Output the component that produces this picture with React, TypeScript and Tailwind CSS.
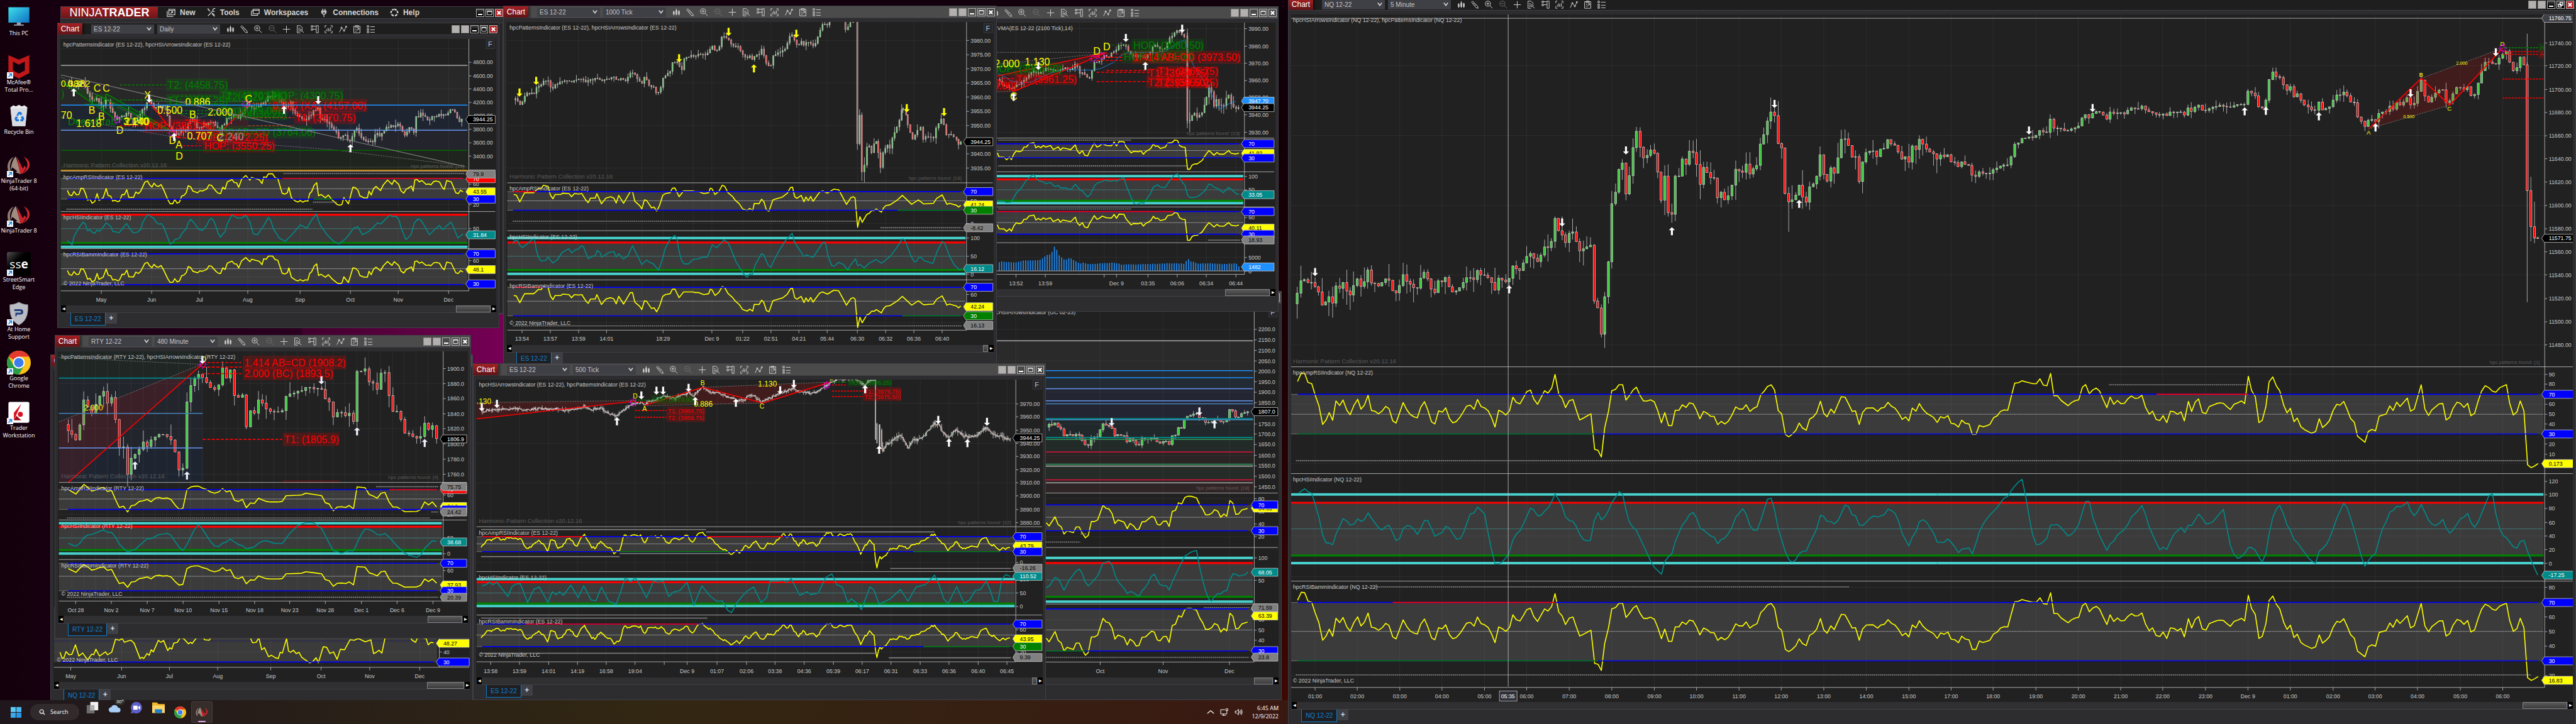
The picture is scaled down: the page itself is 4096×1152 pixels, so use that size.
import { createContext, useContext } from "react";
import type { ReactNode } from "react";

const GREEN = "#008000";
const BLUE = "#0000ff";
const RED = "#ff0000";
const YELLOW = "#ffff00";
const TEAL = "#008b8b";
const TURQ = "#48d1cc";
const SKY = "#1e90ff";
const GRAY = "#808080";
const LIGHT = "#c8c8c8";

/* ---------- chart geometry ---------- */

type Geo = {
  o: [number, number]; // origin of the plotting grid
  s: [number, number]; // grid unit size
  l: number; // left edge of the plot
  r: number; // right edge of the plot
  a: number; // price axis
  e: number; // end of the axis column
};

const GeoCtx = createContext<Geo>({ o: [0, 0], s: [1, 1], l: 0, r: 0, a: 0, e: 0 });

function useGeo() {
  const g = useContext(GeoCtx);
  return {
    ...g,
    X: (n: number) => g.o[0] + n * g.s[0],
    Y: (n: number) => g.o[1] + n * g.s[1],
  };
}

const parse = (pts: string) =>
  pts
    .trim()
    .split(/\s+/)
    .map((p) => p.split(",").map(Number) as [number, number]);

const rnd = (i: number) => {
  const v = Math.sin(i * 12.9898 + 4.1) * 43758.5453;
  return v - Math.floor(v);
};

const sample = (keys: [number, number][], step: number, noise: number) => {
  const out: [number, number][] = [];
  let k = 0;
  for (let x = keys[0][0], i = 0; x <= keys[keys.length - 1][0]; x += step, i++) {
    while (k < keys.length - 2 && keys[k + 1][0] < x) k++;
    const [ax, ay] = keys[k];
    const [bx, by] = keys[k + 1];
    const t = bx === ax ? 1 : Math.min(1, (x - ax) / (bx - ax));
    out.push([x, ay + (by - ay) * t + (rnd(i) - 0.5) * noise]);
  }
  return out;
};

/* ---------- chart primitives ---------- */

function H({ y, x1, x2, c, w = 2, dash }: { y: number; x1?: number; x2?: number; c: string; w?: number; dash?: string }) {
  const g = useGeo();
  return (
    <line x1={g.X(x1 ?? g.l)} x2={g.X(x2 ?? g.r)} y1={g.Y(y)} y2={g.Y(y)} stroke={c} strokeWidth={w} strokeDasharray={dash} />
  );
}

function V({ x, y1, y2, c = LIGHT, w = 1 }: { x: number; y1: number; y2: number; c?: string; w?: number }) {
  const g = useGeo();
  return <line x1={g.X(x)} x2={g.X(x)} y1={g.Y(y1)} y2={g.Y(y2)} stroke={c} strokeWidth={w} />;
}

function Path({ pts, c, w = 2, dash, fill = "none", dy }: { pts: string; c?: string; w?: number; dash?: string; fill?: string; dy?: (y: number) => number }) {
  const g = useGeo();
  const d = parse(pts)
    .map(([x, y]) => `${g.X(x).toFixed(1)},${g.Y(dy ? dy(y) : y).toFixed(1)}`)
    .join(" ");
  return <polyline points={d} fill={fill} stroke={c ?? "none"} strokeWidth={w} strokeDasharray={dash} strokeLinejoin="round" />;
}

function Zone({ y1, y2, x1, x2, c }: { y1: number; y2: number; x1?: number; x2?: number; c: string }) {
  const g = useGeo();
  const a = g.X(x1 ?? g.l);
  return <rect x={a} y={g.Y(y1)} width={g.X(x2 ?? g.r) - a} height={g.Y(y2) - g.Y(y1)} fill={c} />;
}

function Txt({ x, y, t, c = LIGHT, s = 11, mid }: { x: number; y: number; t: string; c?: string; s?: number; mid?: boolean }) {
  const g = useGeo();
  return (
    <text x={g.X(x)} y={g.Y(y)} fill={c} fontSize={s} textAnchor={mid ? "middle" : "start"}>
      {t}
    </text>
  );
}

function Note({ b, t, c, s = 20 }: { b: [number, number, number, number]; t: string; c: "r" | "g"; s?: number }) {
  const g = useGeo();
  const x = g.X(b[0]);
  const y = g.Y(b[1]);
  const h = g.Y(b[3]) - y;
  return (
    <g fill={c === "r" ? "#ff0000" : "#008000"}>
      <rect x={x} y={y} width={g.X(b[2]) - x} height={h} fillOpacity={0.2} />
      <text x={x + 3} y={y + h / 2 + s * 0.36} fontSize={s}>
        {t}
      </text>
    </g>
  );
}

function Grid({ xs, ys, top, bottom }: { xs: number[]; ys: number[]; top: number; bottom: number }) {
  const g = useGeo();
  return (
    <g stroke="#ffffff" strokeOpacity={0.07}>
      {xs.map((x) => (
        <line key={x} x1={g.X(x)} x2={g.X(x)} y1={g.Y(top)} y2={g.Y(bottom)} />
      ))}
      {ys.map((y) => (
        <line key={y} x1={g.X(g.l)} x2={g.X(g.r)} y1={g.Y(y)} y2={g.Y(y)} />
      ))}
    </g>
  );
}

function Candles({ pts, step, body = 4, wick = 6, noise = 0, mono }: { pts: string; step?: number; body?: number; wick?: number; noise?: number; mono?: boolean }) {
  const g = useGeo();
  const keys = parse(pts);
  const bars = step ? sample(keys, step, noise) : keys;
  let up = "";
  let down = "";
  let wicks = "";
  bars.forEach(([x, y], i) => {
    if (i === 0) return;
    const px = g.X(x);
    const a = g.Y(bars[i - 1][1]);
    const b = g.Y(y);
    const top = Math.min(a, b);
    const h = Math.max(1, Math.abs(a - b));
    const box = `M${(px - body / 2).toFixed(1)} ${top.toFixed(1)}h${body}v${h.toFixed(1)}h${-body}z`;
    if (b <= a) up += box;
    else down += box;
    const wa = rnd(i * 3 + 1) ** 2 * wick;
    const wb = rnd(i * 5 + 2) ** 2 * wick;
    wicks += `M${px.toFixed(1)} ${(top - wa).toFixed(1)}V${(top + h + wb).toFixed(1)}`;
  });
  return (
    <g stroke="#d0d0d0" strokeWidth={1}>
      <path d={wicks} fill="none" />
      <path d={up} fill={mono ? "#e0e0e0" : "#32cd32"} />
      <path d={down} fill={mono ? "#d02020" : "#ff0000"} />
    </g>
  );
}

function Arrows({ down = "", up = "", c = "#ffffff" }: { down?: string; up?: string; c?: string }) {
  const g = useGeo();
  const shape = (x: number, y: number, k: number) => `M${x} ${y}l6 ${-6 * k}h-4v${-10 * k}h-4v${10 * k}h-4z`;
  const draw = (list: string, k: number) =>
    list ? parse(list).map(([x, y]) => <path key={x} d={shape(g.X(x), g.Y(y), k)} fill={c} />) : null;
  return (
    <>
      {draw(down, 1)}
      {draw(up, -1)}
    </>
  );
}

function Burst({ x, y }: { x: number; y: number }) {
  const g = useGeo();
  return (
    <g transform={`translate(${g.X(x)} ${g.Y(y)})`} stroke="#ff00ff" fill="none">
      <circle r={5} />
      {[0, 45, 90, 135, 180, 225, 270, 315].map((a) => (
        <line key={a} x1={5} x2={9} transform={`rotate(${a})`} />
      ))}
    </g>
  );
}

type Seg = [number, number];

function Band({ y70, mid, y30, from, to, red, green, line, shift }: { y70: number; mid: number; y30: number; from: number; to: number; red?: Seg[]; green?: Seg[]; line: string; shift?: (y: number) => number }) {
  return (
    <>
      <Zone y1={y70} y2={y30} c="#ffffff1e" />
      <H y={mid} c="#ffffff" w={1} dash="1 1" />
      <H y={y70} c={GRAY} w={1} x2={from} />
      <H y={y30} c={GRAY} w={1} x2={from} />
      <Path pts={line} c={YELLOW} dy={shift} />
      <H y={y70} c={BLUE} w={2} x1={from} x2={to} />
      <H y={y30} c={BLUE} w={2} x1={from} x2={to} />
      {red?.map((r) => <H key={r[0]} y={y70} c={RED} w={2} x1={r[0]} x2={r[1]} />)}
      {green?.map((r) => <H key={r[0]} y={y30} c={GREEN} w={2} x1={r[0]} x2={r[1]} />)}
    </>
  );
}

function Hsi({ hi, red, mid, green, lo, line }: { hi?: number; red: number; mid: number; green: number; lo: number; line: string }) {
  return (
    <>
      <Zone y1={red} y2={green} c="#ffffff1e" />
      <H y={mid} c={TURQ} w={1} dash="1 1" />
      {hi !== undefined && <H y={hi} c={TURQ} w={5} />}
      <H y={red} c={RED} w={4} />
      <H y={green} c={GREEN} w={4} />
      <H y={lo} c={TURQ} w={5} />
      <Path pts={line} c={TEAL} w={2} />
    </>
  );
}

function Dashes({ list }: { list: [number, number, number][] }) {
  return (
    <>
      {list.map(([y, a, b]) => (
        <H key={`${y}-${a}`} y={y} x1={a} x2={b} c={GRAY} w={2} dash="3 1" />
      ))}
    </>
  );
}

function Axis({ marks, top, bottom, seps }: { marks: string; top: number; bottom: number; seps: number[] }) {
  const g = useGeo();
  return (
    <>
      {seps.map((y) => (
        <H key={y} y={y} x2={g.e} c={LIGHT} w={1} />
      ))}
      <V x={g.a} y1={top} y2={bottom} />
      {marks.split(" ").map((m) => {
        const [y, label] = m.split(":");
        return (
          <g key={m}>
            <line x1={g.X(g.a)} x2={g.X(g.a) + 5} y1={g.Y(+y)} y2={g.Y(+y)} stroke={LIGHT} />
            <text x={g.X(g.a) + 8} y={g.Y(+y) + 4} fill={LIGHT} fontSize={11}>
              {label}
            </text>
          </g>
        );
      })}
    </>
  );
}

function Tag({ y, t, c, ink }: { y: number; t: string; c: string; ink?: string }) {
  const g = useGeo();
  const a = g.X(g.a);
  const e = g.X(g.e);
  const py = g.Y(y);
  return (
    <g>
      <path d={`M${a - 6} ${py}l5 -8H${e}v16H${a - 1}z`} fill={c} stroke={LIGHT} />
      <text x={a + 8} y={py + 4} fontSize={11} fill={ink ?? (c === YELLOW || c === GRAY ? "#000000" : "#ffffff")}>
        {t}
      </text>
    </g>
  );
}

function Times({ y, ly, marks, end }: { y: number; ly: number; marks: [number, string][]; end?: number }) {
  const g = useGeo();
  return (
    <>
      <H y={y} x2={end ?? g.a} c={LIGHT} w={1} />
      {marks.map(([x, t]) => (
        <g key={x}>
          <line x1={g.X(x)} x2={g.X(x)} y1={g.Y(y)} y2={g.Y(y) + 6} stroke={LIGHT} />
          <text x={g.X(x)} y={g.Y(ly) + 4} fill={LIGHT} fontSize={11} textAnchor="middle">
            {t}
          </text>
        </g>
      ))}
    </>
  );
}

function FixedMark({ x, y }: { x: number; y: number }) {
  return (
    <g>
      <rect x={x} y={y} width={17} height={18} fill="#25262a" stroke="#3f3f46" />
      <text x={x + 8} y={y + 14} fontSize={14} fill="#b8c4d8" textAnchor="middle">
        F
      </text>
    </g>
  );
}

/* ---------- window chrome ---------- */

const toolIcons: { name: string; d: string; dim?: boolean }[] = [
  { name: "Bar type", d: "M3 5v9M8 1v13M13 4v10M2 7h2v5H2zM7 4h2v8H7zM12 6h2v6h-2z" },
  { name: "Drawing tools", d: "M1 3l2-2 10 10 1 4-4-1zM4 6l2-2M6 8l2-2M8 10l2-2" },
  { name: "Zoom in", d: "M11 6A5 5 0 1 1 1 6a5 5 0 0 1 10 0zM10 10l5 5M3 6h6M6 3v6" },
  { name: "Zoom out", d: "M11 6A5 5 0 1 1 1 6a5 5 0 0 1 10 0zM10 10l5 5M3 6h6", dim: true },
  { name: "Cursor", d: "M8 1v14M1 8h14" },
  { name: "Data box", d: "M8 15H2V1h6l4 4v2M4 6h4M4 9h3M4 12h3M12 10a2 2 0 1 1-4 0 2 2 0 0 1 4 0zM12 12l3 3" },
  { name: "Chart trader", d: "M1 1h3v3H1zM1 7h3v3H1zM4 2h7M4 8h7M11 1h4v14h-4z" },
  { name: "Data series", d: "M4 1H1v4M12 1h3v4M4 15H1v-4M12 15h3v-4M4 8v4M7 5v7M9 7v5M12 4v8" },
  { name: "Indicators", d: "M1 14l4-9 5 6 4-8M4 4h2v2H4zM9 10h2v2H9zM13 2h2v2h-2z" },
  { name: "Strategies", d: "M2 2h12v13H2zM5 1h6v3H5zM5 7l2 2M7 7L5 9M9 6h3v3M12 6l-4 5M5 12h2" },
  { name: "Properties", d: "M1 1h3v3H1zM1 7h3v3H1zM1 12h3v3H1zM7 3h9M7 9h9M7 14h9" },
];

function Picker({ label, value }: { label: string; value: string }) {
  return (
    <label className="flex h-[15px] w-[100px] items-center bg-[#3f3f46] px-1">
      <select aria-label={label} className="min-w-0 flex-1 appearance-none bg-transparent text-[10px] leading-[15px] text-[#c4c4c4] outline-none">
        <option>{value}</option>
      </select>
      <svg viewBox="0 0 10 8" className="h-2 w-2 pointer-events-none">
        <path d="M1 1l4 5 4-5" fill="none" stroke="#d0d0d0" strokeWidth="2" />
      </svg>
    </label>
  );
}

function WindowButtons({ active, links = true, restore }: { active?: boolean; links?: boolean; restore?: boolean }) {
  const face = active ? "bg-gradient-to-b from-[#444] to-black" : "bg-[#4a4a4a]";
  return (
    <div className="flex gap-[2px]">
      {links && (
        <>
          <button aria-label="Instrument link" className="size-[13px] border border-[#8a8a8a] bg-[#b4b0b0]" />
          <button aria-label="Interval link" className="size-[13px] border border-[#8a8a8a] bg-[#b4b0b0]" />
        </>
      )}
      <button aria-label="Minimize" className={`flex size-[13px] items-end justify-center border border-[#b0b0b0] p-[2px] ${face}`}>
        <span className="h-[2px] w-full bg-white" />
      </button>
      <button aria-label="Maximize" className={`flex size-[13px] items-center justify-center border border-[#b0b0b0] ${face}`}>
        <svg viewBox="0 0 10 10" className="size-[9px]" fill="none" stroke="#fff">
          {restore ? <path d="M4 1h5v5H4zM1 4h5v5H1z" strokeWidth="1.5" /> : <path d="M1 1.5h8v7H1zM1 2.5h8" />}
        </svg>
      </button>
      <button aria-label="Close" className={`flex size-[13px] items-center justify-center border border-[#b0b0b0] ${active ? "bg-[#b3262a]" : face}`}>
        <svg viewBox="0 0 10 10" className="size-[9px]">
          <path d="M2 2l6 6M8 2l-6 6" stroke="#fff" strokeWidth="2.4" />
        </svg>
      </button>
    </div>
  );
}

type WinProps = {
  place: string;
  symbol: string;
  interval: string;
  view: string;
  thumb: string;
  geo: Geo;
  active?: boolean;
  restore?: boolean;
  children: ReactNode;
};

function ChartWindow({ place, symbol, interval, view, thumb, geo, active, restore, children }: WinProps) {
  return (
    <section className={`absolute flex flex-col border border-[#3f3f46] bg-[#2d2d30] ${place}`}>
      <header className={`flex h-[19px] shrink-0 items-center border-b border-[#3f3f46] pr-[2px] ${active ? "bg-[#1e1e1e]" : "bg-[#4b4b4b]"}`}>
        <h2 className="flex h-full w-[39px] items-center justify-center bg-gradient-to-b from-[#a61f23] to-[#5f1417] text-xs text-white shadow-[3px_0_3px_#00000066]">
          Chart
        </h2>
        <div className="ml-[14px] flex gap-[5px]">
          <Picker label="Instrument" value={symbol} />
          <Picker label="Interval" value={interval} />
        </div>
        <div className="ml-[5px] grid w-[246px] grid-cols-11">
          {toolIcons.map((t) => (
            <button key={t.name} aria-label={t.name} className="flex justify-center">
              <svg viewBox="0 0 16 16" className="size-[13px]" fill="none" stroke={t.dim ? "#6e6e6e" : "#cfcfcf"} strokeWidth="1.2">
                <path d={t.d} />
              </svg>
            </button>
          ))}
        </div>
        <div className="ml-auto">
          <WindowButtons active={active} restore={restore} />
        </div>
      </header>
      <div className="mx-1 mt-[6px] flex min-h-0 flex-1 flex-col bg-[#212121]">
        <svg viewBox={view} preserveAspectRatio="xMinYMin slice" className="min-h-0 w-full flex-1 overflow-hidden">
          <GeoCtx.Provider value={geo}>{children}</GeoCtx.Provider>
        </svg>
        <div className="flex h-3 shrink-0 items-center border-b border-[#3f3f46] bg-[#303032]">
          <button aria-label="Scroll left" className="ml-px flex h-[11px] w-2 items-center justify-center bg-black text-[6px] text-white">
            ◀
          </button>
          <span className={`ml-auto h-[11px] border border-[#808080] bg-gradient-to-b from-[#5a5a5a] to-[#3c3c3c] ${thumb}`} />
          <button aria-label="Scroll right" className="ml-px flex h-[11px] w-2 items-center justify-center bg-black text-[6px] text-white">
            ▶
          </button>
        </div>
      </div>
      <footer className="flex h-[23px] shrink-0 pl-5">
        <button className="h-5 border border-t-0 border-[#0e7ac4] bg-[#1f1f22] px-[6px] text-[10px] text-[#0f7fcf]">{symbol}</button>
        <button aria-label="Add tab" className="h-[17px] w-[18px] bg-[#3f3f46] text-xs leading-[17px] font-bold text-[#dcdcdc]">
          +
        </button>
      </footer>
    </section>
  );
}

/* ---------- ES daily ---------- */

const dailyRsi =
  "402,1135 413,1162 428,1167 441,1142 456,1162 470,1160 483,1123 497,1125 510,1155 522,1194 537,1188 549,1212 565,1202 579,1155 590,1195 615,1180 633,1125 645,1167 660,1170 672,1200 687,1195 700,1203 712,1200 728,1160 741,1162 756,1132 768,1177 796,1178 810,1145 824,1155 838,1142 864,1086 880,1080 892,1103 906,1116 918,1093 933,1110 946,1112 960,1101 975,1130 1000,1190 1014,1215 1030,1215 1042,1190 1056,1212 1070,1205 1083,1170 1097,1165 1110,1150 1122,1108 1137,1115 1150,1140 1178,1150 1192,1137 1206,1140 1232,1128 1246,1103 1260,1105 1287,1140 1300,1152 1315,1155 1328,1117 1342,1128 1355,1085 1383,1071 1397,1089 1410,1090 1423,1117 1440,1070 1465,1047 1490,1075 1500,1058 1546,1072 1562,1095 1572,1055 1587,1058 1600,1037 1625,1037 1640,1060 1656,1065 1682,1153 1697,1158 1713,1150 1722,1118 1737,1180 1762,1200 1777,1205 1790,1196 1805,1206 1820,1198 1835,1200 1846,1155 1858,1143 1873,1105 1888,1090 1899,1168 1913,1160 1940,1180 1957,1163 1980,1192 2010,1220 2025,1224 2038,1220 2050,1178 2077,1216 2104,1117 2120,1120 2135,1137 2145,1168 2170,1180 2190,1180 2200,1140 2213,1163 2227,1125 2242,1112 2268,1137 2285,1103 2310,1074 2337,1100 2350,1075 2377,1100 2390,1138 2407,1152 2420,1130 2440,1118 2453,1110 2463,1140 2473,1073 2485,1070 2500,1085 2515,1077 2540,1100 2558,1097 2568,1103 2585,1083 2600,1080 2620,1085 2635,1115 2648,1130 2663,1077 2690,1085 2717,1150 2732,1155 2745,1135 2760,1145";
const dailyHsi =
  "402,1435 430,1460 441,1412 470,1360 495,1325 510,1338 522,1378 537,1370 549,1385 565,1392 579,1372 592,1380 610,1362 633,1330 660,1350 672,1380 712,1387 740,1350 756,1334 775,1365 796,1390 824,1382 838,1370 850,1330 880,1278 916,1302 930,1325 945,1337 962,1334 975,1352 990,1392 1014,1455 1030,1450 1042,1430 1070,1420 1083,1395 1110,1365 1122,1330 1137,1308 1165,1340 1180,1365 1206,1375 1232,1345 1246,1315 1260,1302 1275,1320 1287,1350 1300,1390 1315,1415 1328,1395 1342,1382 1355,1335 1383,1282 1400,1292 1420,1302 1440,1300 1465,1284 1490,1325 1510,1395 1535,1400 1570,1350 1600,1298 1615,1318 1630,1365 1665,1420 1700,1440 1740,1400 1789,1342 1830,1360 1860,1310 1886,1276 1900,1320 1913,1350 1950,1400 1990,1440 2020,1455 2060,1425 2110,1360 2133,1352 2160,1400 2200,1380 2230,1350 2250,1330 2270,1336 2300,1305 2325,1283 2340,1292 2360,1290 2377,1308 2392,1360 2420,1430 2450,1400 2470,1330 2490,1308 2505,1310 2520,1330 2560,1400 2590,1370 2620,1345 2640,1370 2665,1345 2690,1325 2705,1360 2730,1420 2760,1395";
const dailyPrice =
  "400,490 440,510 470,520 495,480 510,520 530,570 545,600 580,590 605,640 640,590 670,680 700,720 730,690 765,665 790,745 830,700 860,640 890,600 920,640 940,625 985,640 1000,700 1015,760 1040,790 1066,800 1110,760 1150,715 1185,765 1220,740 1260,720 1310,770 1350,720 1380,690 1430,700 1470,620 1500,640 1540,635 1570,615 1600,580 1640,565 1665,580 1700,640 1735,615 1750,670 1790,700 1830,720 1870,660 1897,635 1905,710 1960,735 1990,770 2020,820 2050,800 2089,850 2105,780 2135,775 2150,830 2190,850 2225,840 2240,790 2270,815 2310,760 2350,760 2365,730 2390,760 2410,800 2450,760 2468,785 2472,700 2510,685 2550,710 2590,690 2620,675 2650,700 2680,655 2705,665 2730,715 2765,710";

function DailyChart() {
  return (
    <>
      <Zone y1={390} y2={627} c="#282828" />
      <Zone y1={627} y2={777} c="#1f2530" />
      <Zone y1={777} y2={897} c="#24242c" />
      <Zone y1={897} y2={1016} c="#20241f" />
      <Grid xs={[604, 904, 1189, 1477, 1789, 2089, 2374, 2674]} ys={[290, 529, 769, 1033, 1220, 1651]} top={230} bottom={1735} />
      <Path pts="363,485 580,565 640,560 1040,795 700,720" fill="#00800030" />
      <Path pts="885,605 1145,712 1310,785 1480,630 1480,760 1066,826" fill="#ff000020" />
      <Path pts="363,460 1040,795" c={GRAY} w={1} dash="3 2" />
      <Path pts="363,700 1066,822 1985,893 2770,990" c={GRAY} w={1} dash="3 2" />
      <Path pts="700,640 1040,795" c={GRAY} w={1} dash="3 2" />
      <Path pts="885,605 1480,605" c={GRAY} w={1} dash="3 2" />
      <Path pts="885,605 1145,710 1480,630" c={GRAY} w={1} dash="3 2" />
      <H y={997} c="#5a5a5a" w={1} dash="2 1" />
      <Candles pts={dailyPrice} step={13.6} body={2} wick={12} noise={26} />
      <Path pts="363,485 700,720" c={GREEN} w={2} />
      <Path pts="545,620 580,565 1040,795" c={GREEN} w={2} />
      <Path pts="605,655 635,560 1040,790" c={GREEN} w={2} />
      <Path pts="505,622 590,622" c={GREEN} w={2} />
      <Path pts="885,605 1060,822 1150,715 1310,790 1480,630" c={RED} w={2} />
      <Path pts="1105,716 1195,716" c={RED} w={2} />
      <H y={507} x1={715} x2={990} c={GREEN} dash="5 3" />
      <H y={597} x1={715} x2={990} c={GREEN} dash="5 3" />
      <H y={573} x1={1030} x2={1300} c={GREEN} dash="5 3" />
      <H y={660} x1={1030} x2={1300} c={GREEN} dash="5 3" />
      <H y={678} x1={1030} x2={1340} c={GREEN} dash="5 3" />
      <H y={710} x1={715} x2={850} c={GREEN} dash="5 3" />
      <H y={750} x1={715} x2={850} c={RED} dash="5 3" />
      <H y={822} x1={1066} x2={1165} c={RED} dash="5 3" />
      <H y={870} x1={1066} x2={1205} c={RED} dash="5 3" />
      <H y={616} x1={1480} x2={1620} c="#d03018" dash="5 3" />
      <H y={702} x1={1480} x2={1750} c="#d03018" dash="5 3" />
      <H y={750} x1={1480} x2={1750} c="#d03018" dash="5 3" />
      <Note b={[990, 467, 1362, 545]} t="T2: (4458.75)" c="g" />
      <Note b={[990, 560, 1362, 638]} t="T1: (4306.25)" c="g" />
      <Note b={[1305, 532, 1675, 610]} t="T2: (4270.50)" c="g" />
      <Note b={[1340, 540, 1715, 618]} t="T2: (4297.25)" c="g" />
      <Note b={[1305, 622, 1675, 700]} t="T1: (4079.00)" c="g" />
      <Note b={[1340, 640, 1715, 718]} t="T1: (4036.25)" c="g" />
      <Note b={[1618, 530, 2048, 610]} t="HOP: (4300.75)" c="g" />
      <Note b={[1235, 748, 1860, 826]} t="1.130 AB=CD (3764.00)" c="g" />
      <Note b={[1615, 590, 2190, 668]} t="0.886 (XA) (4157.00)" c="r" />
      <Note b={[1752, 662, 2123, 742]} t="T1: (3970.75)" c="r" />
      <Note b={[852, 712, 1285, 792]} t="HOP: (3851.75)" c="r" />
      <Note b={[1167, 780, 1600, 860]} t="HOP: (3672.25)" c="r" />
      <Note b={[1209, 830, 1642, 910]} t="HOP: (3550.25)" c="r" />
      <Txt x={365} y={580} t=")" c={GREEN} s={20} />
      <Txt x={405} y={745} t="Deep Crab" c={GREEN} s={20} />
      <g>
        <Txt x={363} y={517} t="0.382" c={YELLOW} s={18} />
        <Txt x={403} y={517} t="0.382" c={YELLOW} s={18} />
        <Txt x={558} y={549} t="C" c={YELLOW} s={20} />
        <Txt x={612} y={549} t="C" c={YELLOW} s={20} />
        <Txt x={528} y={678} t="B" c={YELLOW} s={20} />
        <Txt x={585} y={716} t="B" c={YELLOW} s={20} />
        <Txt x={363} y={710} t="70" c={YELLOW} s={20} />
        <Txt x={455} y={758} t="1.618" c={YELLOW} s={20} />
        <Txt x={735} y={746} t="3.140" c={YELLOW} s={20} />
        <Txt x={742} y={746} t="2.240" c={YELLOW} s={20} />
        <Txt x={693} y={797} t="D" c={YELLOW} s={20} />
        <Txt x={860} y={587} t="X" c={YELLOW} s={20} />
        <Txt x={938} y={680} t="0.500" c={YELLOW} s={20} />
        <Txt x={1104} y={631} t="0.886" c={YELLOW} s={20} />
        <Txt x={1129} y={705} t="B" c={YELLOW} s={20} />
        <Txt x={1238} y={691} t="2.000" c={YELLOW} s={20} />
        <Txt x={1460} y={611} t="C" c={YELLOW} s={20} />
        <Txt x={1115} y={832} t="0.707" c={YELLOW} s={20} />
        <Txt x={1292} y={845} t="C" c={YELLOW} s={20} />
        <Txt x={1007} y={857} t="D" c={YELLOW} s={20} />
        <Txt x={1047} y={885} t="A" c={YELLOW} s={20} />
        <Txt x={1047} y={953} t="D" c={YELLOW} s={20} />
        <Txt x={1303} y={837} t="2.240" c="#909090" s={20} />
      </g>
      <H y={390} c="#a9a9a9" />
      <H y={627} c={SKY} />
      <H y={777} c="#6495ed" />
      <H y={897} c="#006400" />
      <Path pts="363,447 2770,993" c={GRAY} w={1.5} />
      <Burst x={698} y={715} />
      <Burst x={1025} y={795} />
      <Burst x={1465} y={620} />
      <Arrows down="889,612 1897,622" up="440,527 1038,793 1693,632 2089,860" />
      <Txt x={378} y={276} t="hpcPatternsIndicator (ES 12-22), hpcHSIArrowsIndicator (ES 12-22)" />
      <Txt x={378} y={998} t="Harmonic Pattern Collection v20.12.16" c="#5a5f5a" s={12} />
      <Txt x={2450} y={1001} t="hpc patterns found: [16]" c="#5a5f5a" s={10} />
      <Band y70={1064} mid={1126} y30={1188} from={402} to={2760} red={[[1683, 2760]]} green={[[1872, 1983]]} line={dailyRsi} />
      <Dashes list={[[1248, 396, 1863], [1035, 1690, 2770], [1206, 1866, 2010]]} />
      <Hsi red={1281} mid={1364} green={1449} lo={1472} line={dailyHsi} />
      <Band y70={1514} mid={1603} y30={1698} from={402} to={2760} line={dailyRsi} shift={(y) => 1606 + (y - 1126) * 0.88} />
      <Txt x={378} y={1068} t="hpcAmpRSIIndicator (ES 12-22)" />
      <Txt x={378} y={1308} t="hpcHSIIndicator (ES 12-22)" />
      <Txt x={378} y={1530} t="hpcRSIBammIndicator (ES 12-22)" />
      <Txt x={378} y={1704} t="© 2022 NinjaTrader, LLC" />
      <Axis
        marks="372:4800.00 453:4600.00 530:4400.00 611:4200.00 688:4000.00 771:3800.00 852:3600.00 931:3400.00 1099:60 1221:20 1364:50 1555:60"
        top={230}
        bottom={1735}
        seps={[1021, 1262, 1483]}
      />
      <H y={1016} c="#ffa500" />
      <Tag y={713} t="3944.25" c="#000000" />
      <Tag y={1066} t="70" c={RED} />
      <Tag y={1038} t="79.9" c={GRAY} />
      <Tag y={1144} t="43.55" c={YELLOW} />
      <Tag y={1188} t="30" c={BLUE} />
      <Tag y={1401} t="31.84" c={TEAL} />
      <Tag y={1514} t="70" c={BLUE} />
      <Tag y={1608} t="48.1" c={YELLOW} />
      <Tag y={1694} t="30" c={BLUE} />
      <FixedMark x={966} y={79} />
      <Times
        y={1735}
        ly={1787}
        marks={[[604, "May"], [904, "Jun"], [1189, "Jul"], [1477, "Aug"], [1789, "Sep"], [2089, "Oct"], [2374, "Nov"], [2674, "Dec"]]}
      />
    </>
  );
}

/* ---------- RTY 480 minute ---------- */

const rtyPrice =
  "51,370 65,395 78,410 92,432 107,372 121,272 136,300 150,326 165,290 179,257 193,238 207,285 222,262 236,350 250,462 265,460 280,570 293,505 307,490 322,470 337,440 351,458 365,432 380,420 394,410 408,410 423,418 437,432 452,480 466,552 480,545 495,280 509,215 523,187 537,170 551,183 566,202 580,223 595,230 610,212 624,145 638,185 652,152 667,255 681,262 696,252 710,380 725,315 739,325 754,272 768,285 782,308 797,318 811,319 825,320 840,315 854,258 868,248 883,245 897,237 911,235 925,222 940,222 955,228 969,226 983,230 996,268 1010,280 1025,340 1040,322 1055,322 1069,335 1083,325 1098,358 1111,158 1126,157 1140,148 1155,200 1169,205 1184,230 1198,165 1212,163 1227,255 1241,318 1255,318 1270,350 1284,405 1299,408 1313,418 1327,425 1341,418 1356,365 1370,390 1384,375 1399,427";
const rtyRsi =
  "65,630 80,640 93,648 107,628 122,610 136,622 150,637 165,632 179,625 193,622 207,638 222,634 236,670 250,702 265,697 280,720 293,695 307,692 322,678 337,675 351,670 365,679 380,665 394,662 408,666 423,664 437,670 452,692 466,709 480,706 495,630 509,620 523,617 537,617 551,625 566,630 580,640 595,645 610,640 624,626 638,640 652,635 667,673 681,678 696,670 710,703 725,684 739,686 754,665 768,672 782,678 797,680 825,680 840,678 854,655 897,653 911,652 925,645 955,650 983,655 996,683 1010,688 1025,715 1040,700 1055,699 1069,702 1083,694 1098,708 1111,620 1140,623 1155,650 1169,656 1184,665 1198,645 1212,642 1227,680 1241,700 1255,700 1270,710 1284,719 1327,718 1341,711 1356,680 1370,692 1384,680 1399,700";
const rtyHsi =
  "65,845 92,857 107,845 122,822 136,812 150,810 179,797 193,792 207,801 222,802 236,820 250,848 265,865 280,880 307,870 322,855 351,827 365,827 394,810 408,809 423,805 437,813 452,838 466,860 480,874 495,850 509,820 523,788 537,769 551,788 580,838 595,856 610,858 624,845 638,840 652,828 667,840 681,850 696,855 710,867 739,860 754,845 768,837 782,835 811,845 840,846 854,825 868,805 897,774 925,763 940,762 955,764 983,786 1010,845 1025,875 1055,884 1083,875 1098,876 1111,845 1126,810 1140,788 1155,790 1169,797 1184,810 1198,812 1212,806 1227,820 1255,855 1284,885 1299,893 1327,901 1341,892 1356,865 1384,835 1399,838";
const rtyGrid = Array.from({ length: 31 }, (_, i) => 78 + i * 43);

function RtyChart() {
  return (
    <>
      <Zone y1={77} y2={185} x2={552} c="#1f2624" />
      <Zone y1={185} y2={464} x2={552} c="#23252d" />
      <Zone y1={464} y2={602} x2={552} c="#1e2530" />
      <Grid xs={rtyGrid} ys={[206, 387, 569, 650, 730]} top={77} bottom={1076} />
      <Candles pts={rtyPrice} body={4} wick={24} />
      <Path pts="31,360 552,128 65,602 31,602" fill="#ff00001c" />
      <Path pts="31,103 552,130" c={GRAY} w={1} dash="3 2" />
      <Path pts="31,360 552,128" c={GRAY} w={1} dash="3 2" />
      <H y={185} x2={552} c={TEAL} />
      <H y={326} x2={552} c="#4682b4" />
      <H y={464} x2={552} c="#6495ed" />
      <Path pts="65,602 552,128" c={RED} w={2} />
      <Burst x={552} y={130} />
      <H y={123} x1={552} x2={693} c={RED} dash="6 3" />
      <H y={141} x1={552} x2={693} c={RED} dash="6 3" />
      <H y={167} x1={552} x2={693} c={RED} dash="6 3" />
      <H y={430} x1={552} x2={840} c={RED} dash="6 3" />
      <Note b={[697, 95, 1072, 150]} t="1.414 AB=CD (1908.2)" c="r" />
      <Note b={[697, 140, 1027, 193]} t="2.000 (BC) (1893.5)" c="r" />
      <Note b={[842, 403, 1048, 457]} t="T1: (1805.9)" c="r" />
      <Zone y1={593} y2={602} x1={842} x2={1048} c="#ff000030" />
      <Txt x={122} y={315} t="2.000" c={YELLOW} s={15} />
      <Txt x={545} y={120} t="D" c={YELLOW} s={15} />
      <Arrows down="551,128 982,210" up="307,518 495,558 1111,382 1356,428" c="#f0f0ff" />
      <Txt x={40} y={108} t="hpcPatternsIndicator (RTY 12-22), hpcHSIArrowsIndicator (RTY 12-22)" />
      <Txt x={40} y={585} t="Harmonic Pattern Collection v20.12.16" c="#5a5a60" s={12} />
      <Txt x={1224} y={589} t="hpc patterns found: [4]" c="#5a5a5a" s={10} />
      <Band y70={631} mid={668} y30={710} from={65} to={1400} red={[[1228, 1400]]} line={rtyRsi} />
      <Dashes list={[[744, 60, 1375], [619, 1180, 1405], [720, 1380, 1405], [1061, 60, 1405]]} />
      <Hsi hi={765} red={779} mid={824} green={872} lo={886} line={rtyHsi} />
      <Band y70={925} mid={977} y30={1035} from={65} to={1400} line={rtyRsi} shift={(y) => 978 + (y - 668) * 0.83} />
      <Txt x={40} y={633} t="hpcAmpRSIIndicator (RTY 12-22)" />
      <Txt x={40} y={784} t="hpcHSIIndicator (RTY 12-22)" />
      <Txt x={40} y={941} t="hpcRSIBammIndicator (RTY 12-22)" />
      <Txt x={40} y={1055} t="© 2022 NinjaTrader, LLC" />
      <Axis
        marks="147:1900.0 207:1880.0 267:1860.0 328:1840.0 387:1820.0 448:1800.0 509:1780.0 569:1760.0 652:60 730:20 824:50 887:0 954:60"
        top={77}
        bottom={1076}
        seps={[602, 752, 910]}
      />
      <Tag y={428} t="1806.9" c="#000000" />
      <Tag y={630} t="70" c={RED} />
      <Tag y={619} t="75.75" c={GRAY} />
      <Tag y={698} t="34.2" c={YELLOW} />
      <Tag y={710} t="30" c={BLUE} />
      <Tag y={720} t="24.42" c={GRAY} />
      <Tag y={840} t="38.68" c={TEAL} />
      <Tag y={925} t="70" c={BLUE} />
      <Tag y={1012} t="37.93" c={YELLOW} />
      <Tag y={1035} t="30" c={BLUE} />
      <Tag y={1061} t="20.39" c={GRAY} />
      <Times
        y={1076}
        ly={1112}
        marks={[[92, "Oct 28"], [221, "Nov 2"], [351, "Nov 7"], [481, "Nov 10"], [611, "Nov 15"], [740, "Nov 18"], [867, "Nov 23"], [996, "Nov 28"], [1127, "Dec 1"], [1256, "Dec 6"], [1386, "Dec 9"]]}
      />
    </>
  );
}

/* ---------- NQ daily, mostly behind the RTY window ---------- */

function NqDailyChart() {
  return (
    <>
      <Zone y1={1100} y2={1319} c="#3b3b3b" />
      <Grid xs={[74, 258, 431, 606, 798, 980, 1156, 1337]} ys={[1279]} top={1100} bottom={1340} />
      <H y={1235} c="#00008b" w={1} dash="1 1" />
      <Path
        c={YELLOW}
        pts="35,1280 43,1305 50,1300 57,1277 68,1290 78,1288 91,1250 103,1295 117,1283 135,1310 150,1287 157,1290 165,1268 178,1295 200,1278 207,1290 222,1280 236,1228 250,1232 260,1225 268,1240 280,1235 292,1232 303,1243 325,1305 332,1300 338,1305 350,1285 358,1292 365,1270 373,1278 391,1232 400,1240 410,1233 425,1273 432,1262 440,1267 447,1243 460,1240 470,1222 482,1225 500,1246 508,1240 513,1245 525,1228 545,1200 558,1230 575,1232 600,1190 700,1190 725,1225 732,1242 745,1240 755,1222 765,1270 775,1262 790,1298 800,1292 815,1302 825,1305 832,1280 840,1283 855,1225 862,1275 870,1280 880,1272 890,1285 900,1280 910,1300 938,1322 950,1317 962,1302 970,1322 988,1258 1000,1260 1012,1285 1025,1278 1038,1308 1050,1268 1065,1270 1085,1230 1100,1232 1115,1225 1140,1238 1160,1230 1170,1285 1180,1280 1190,1272 1200,1283 1212,1220 1240,1190 1290,1200 1310,1232 1322,1240 1330,1220 1360,1225 1368,1250 1378,1240 1387,1242"
      />
      <H y={1319} x1={40} x2={1387} c={BLUE} />
      <Txt x={24} y={1319} t="© 2022 NinjaTrader, LLC" />
      <Axis marks="1279:40" top={1100} bottom={1340} seps={[]} />
      <Tag y={1244} t="48.27" c={YELLOW} />
      <Tag y={1319} t="30" c={BLUE} />
      <Times
        y={1340}
        ly={1376}
        end={1516}
        marks={[[74, "May"], [258, "Jun"], [431, "Jul"], [606, "Aug"], [798, "Sep"], [980, "Oct"], [1156, "Nov"], [1337, "Dec"]]}
      />
    </>
  );
}

/* ---------- ES 1000 tick ---------- */

const tickPriceA =
  "31,480 31,445 38,440 45,445 52,465 60,452 67,430 74,418 88,412 97,415 103,392 117,380 125,362 140,360 147,385 155,395 162,378 175,370 190,362 215,362 225,355 245,352 258,365 270,358 292,348 305,358 320,350 345,345 357,362 364,340 378,365 388,345 400,320 410,325 417,352 432,375 440,345 447,352 455,382 470,390 478,415 487,408 497,350 512,325 520,318 527,280 540,275 548,290 555,320 562,265 580,250 607,245 635,240 650,205 660,225 672,220 680,165 690,160 700,175 715,200 735,212 746,245 760,260 770,245 778,275 785,240 797,245 805,222 812,245 820,285 833,295 840,250 860,235 877,220 885,190 895,155 902,152 910,190 920,205 928,180 937,205 945,180 955,195 970,208 978,175 986,140 995,108 1010,110 1020,90";
const tickPriceB =
  "1096,98 1103,640 1110,513 1117,765 1125,735 1133,655 1140,650 1147,680 1155,640 1162,630 1168,680 1175,745 1183,680 1190,660 1197,645 1204,660 1212,615 1219,590 1226,565 1234,535 1241,490 1245,483 1255,510 1260,555 1268,590 1275,620 1283,600 1290,580 1300,565 1308,620 1316,608 1324,612 1332,610 1340,615 1348,570 1356,550 1364,530 1372,555 1380,600 1388,598 1395,600 1403,610 1412,620 1418,643 1425,632";
const tickRsi =
  "33,866 41,868 52,899 60,876 67,858 95,858 103,848 110,838 118,840 125,825 140,830 147,868 155,885 162,866 180,866 185,860 205,862 213,876 222,862 235,864 245,862 258,892 265,902 272,882 287,882 292,862 306,907 320,882 335,876 345,882 352,904 360,870 375,905 396,853 403,853 410,896 425,915 432,930 440,890 447,893 462,925 470,922 478,940 487,915 497,870 505,862 520,858 527,838 535,837 548,876 562,850 590,850 600,853 607,852 625,862 640,858 645,838 650,840 660,866 672,852 682,825 690,830 700,857 715,876 722,890 735,907 746,930 760,937 768,928 777,937 782,906 797,907 805,887 812,898 820,935 828,940 840,890 870,877 885,860 895,835 901,833 908,876 915,883 928,870 937,898 943,877 950,893 958,875 965,896 978,870 986,855 995,850 1010,860 1030,842 1045,845 1060,885 1069,910 1083,880 1090,876 1096,882 1104,1012 1111,965 1118,990 1132,955 1140,950 1148,937 1155,938 1162,930 1178,945 1185,925 1192,915 1205,912 1228,890 1243,870 1258,890 1272,910 1293,890 1309,908 1340,905 1350,883 1367,868 1382,910 1390,905 1412,914 1418,922 1425,914";
const tickHsi =
  "30,1083 38,1070 46,1072 52,1092 60,1102 75,1086 88,1070 97,1062 103,1110 110,1145 118,1162 132,1160 140,1145 155,1171 170,1155 183,1125 198,1112 205,1108 213,1126 228,1110 235,1108 243,1095 250,1098 265,1152 280,1140 287,1138 293,1115 302,1125 307,1145 330,1124 345,1120 352,1144 360,1130 374,1153 388,1140 403,1094 410,1115 417,1135 432,1178 447,1158 455,1167 468,1175 484,1203 497,1150 505,1105 520,1065 534,1048 541,1060 548,1120 556,1160 564,1175 577,1175 592,1155 605,1153 620,1146 635,1145 643,1120 651,1090 665,1103 680,1080 688,1068 700,1080 710,1110 725,1165 740,1200 752,1225 760,1234 768,1220 776,1221 785,1180 804,1130 812,1135 825,1180 834,1190 843,1160 860,1115 880,1070 900,1038 908,1080 922,1110 936,1142 945,1135 965,1146 980,1115 994,1082 1003,1079 1012,1140 1023,1182 1032,1185 1045,1168 1060,1178 1073,1202 1082,1180 1097,1152 1104,1182 1112,1178 1124,1193 1140,1172 1162,1155 1178,1172 1205,1142 1228,1098 1243,1063 1250,1068 1257,1090 1270,1140 1280,1165 1287,1164 1293,1148 1302,1146 1310,1160 1338,1173 1352,1118 1367,1075 1375,1083 1390,1140 1405,1180 1420,1200 1427,1196";

function Tick1000Chart() {
  return (
    <>
      <Grid
        xs={[59, 147, 235, 322, 432, 498, 592, 650, 746, 834, 921, 1009, 1103, 1191, 1279, 1367]}
        ys={[180, 369, 559, 748, 995, 1437]}
        top={97}
        bottom={1470}
      />
      <Candles pts={tickPriceA} step={7.3} body={2} wick={10} noise={8} />
      <Candles pts="1058,90 1066,132 1074,120 1081,100 1090,97" body={2} />
      <V x={1117} y1={500} y2={805} />
      <V x={1125} y1={700} y2={812} />
      <Candles pts={tickPriceB} body={2} wick={12} />
      <Arrows c={YELLOW} down="51,430 103,378 548,277 702,160 913,168 1257,500 1373,517" up="781,287" />
      <Txt x={20} y={132} t="hpcPatternsIndicator (ES 12-22), hpcHSIArrowsIndicator (ES 12-22)" />
      <Txt x={20} y={796} t="Harmonic Pattern Collection v20.12.16" c="#5a5a5a" s={12} />
      <Txt x={1263} y={800} t="hpc patterns found: [18]" c="#5a5a5a" s={10} />
      <Band y70={853} mid={894} y30={936} from={31} to={1425} red={[[31, 103]]} green={[[1228, 1425]]} line={tickRsi} />
      <Dashes list={[[985, 30, 1100], [1014, 1175, 1427], [1451, 30, 1427]]} />
      <Hsi hi={1060} red={1080} mid={1141} green={1202} lo={1219} line={tickHsi} />
      <Band y70={1279} mid={1341} y30={1406} from={31} to={1425} red={[[31, 118]]} green={[[1243, 1425]]} line={tickRsi} shift={(y) => 1343 + (y - 894) * 0.98} />
      <Txt x={20} y={849} t="hpcAmpRSIIndicator (ES 12-22)" />
      <Txt x={20} y={1062} t="hpcHSIIndicator (ES 12-22)" />
      <Txt x={20} y={1281} t="hpcRSIBammIndicator (ES 12-22)" />
      <Txt x={20} y={1447} t="© 2022 NinjaTrader, LLC" />
      <Axis
        marks="180:3980.00 244:3975.00 306:3970.00 370:3965.00 432:3960.00 496:3955.00 559:3950.00 685:3940.00 748:3935.00 894:50 995:0 1060:100 1141:50 1221:0 1311:60"
        top={97}
        bottom={1470}
        seps={[814, 1027, 1246]}
      />
      <Tag y={631} t="3944.25" c="#000000" />
      <Tag y={853} t="70" c={BLUE} />
      <Tag y={912} t="41.24" c={YELLOW} />
      <Tag y={936} t="30" c={GREEN} />
      <Tag y={1014} t="-8.42" c={GRAY} />
      <Tag y={1196} t="16.12" c={TEAL} />
      <Tag y={1279} t="70" c={BLUE} />
      <Tag y={1366} t="42.24" c={YELLOW} />
      <Tag y={1406} t="30" c={GREEN} />
      <Tag y={1449} t="16.13" c={GRAY} />
      <FixedMark x={1955} y={47} />
      <Times
        y={1470}
        ly={1509}
        marks={[[59, "13:54"], [147, "13:57"], [235, "13:59"], [322, "14:01"], [498, "18:29"], [650, "Dec 9"], [746, "01:22"], [834, "02:51"], [921, "04:21"], [1009, "05:44"], [1103, "06:30"], [1191, "06:32"], [1279, "06:36"], [1367, "06:40"]]}
      />
    </>
  );
}

/* ---------- ES 2100 tick ---------- */

const t21Rsi =
  "56,662 65,680 90,681 103,692 117,680 127,691 140,665 152,653 165,657 178,654 190,637 203,636 215,622 240,618 250,640 262,633 275,640 287,630 300,637 323,630 337,647 350,642 362,636 373,650 385,640 410,645 425,648 448,627 457,652 470,665 483,652 495,672 510,675 520,655 543,620 557,637 570,632 583,622 605,630 630,631 643,615 655,632 668,613 692,614 703,635 728,662 740,656 765,657 778,653 790,668 803,655 815,650 828,642 840,623 850,633 863,632 875,643 900,637 912,620 935,617 948,606 962,609 972,630 987,637 1000,638 1012,733 1023,733 1035,715 1047,710 1060,710 1085,695 1105,668 1120,652 1145,672 1160,660 1172,668 1195,668 1218,652 1232,664 1255,667 1270,663";
const t21Volume =
  "66,1135 80,1132 140,1137 190,1128 240,1128 275,1125 300,1107 325,1100 337,1082 348,1058 360,1100 372,1108 385,1120 400,1128 410,1117 430,1120 450,1132 470,1142 485,1137 510,1143 550,1142 590,1140 640,1137 680,1145 750,1145 800,1143 860,1142 930,1140 1000,1142 1011,1115 1023,1130 1035,1135 1047,1132 1060,1142 1120,1140 1180,1143 1257,1141 1272,1156";

function Tick2100Chart() {
  return (
    <>
      <Grid xs={[150, 297, 469, 593, 653, 813, 960, 1106, 1255]} ys={[124, 274, 423, 573, 727, 942, 1038, 1115]} top={97} bottom={1188} />
      <Path pts="40,330 595,232 605,228 138,396 40,340" fill="#ff000024" />
      <Path pts="40,280 600,230" c={GRAY} w={1} dash="3 2" />
      <Path pts="40,398 138,396" c={GRAY} w={1} dash="3 2" />
      <H y={227} x1={56} x2={600} c={GRAY} w={1} dash="3 2" />
      <Candles
        pts="56,345 80,362 105,378 128,390 140,372 155,365 175,360 190,350 205,335 225,315 250,310 262,322 280,310 300,300 325,302 345,308 370,300 400,295 420,305 440,290 450,275 460,295 470,315 490,318 505,335 520,335 535,295 545,265 560,265 575,270 590,240 615,245 640,222 655,215 670,195 690,188 703,205 720,235 745,245 765,238 785,250 800,245 820,230 845,190 860,200 880,215 905,205 920,165 945,145 965,130 985,155 1000,155"
        step={12.2}
        body={2}
        wick={9}
        noise={10}
      />
      <V x={1011} y1={124} y2={535} />
      <V x={1023} y1={388} y2={572} />
      <Candles
        pts="1000,156 1011,521 1023,522 1035,500 1047,490 1060,508 1072,498 1085,488 1097,455 1107,420 1120,380 1132,398 1145,460 1157,430 1170,455 1182,457 1194,458 1207,425 1218,412 1232,450 1243,463 1256,470 1268,466"
        body={2}
        wick={16}
      />
      <Path
        pts="56,318 90,332 130,352 180,360 230,355 280,332 320,318 370,305 420,300 480,304 530,303 570,298 600,287 640,270 670,245 700,230 740,228 800,226 850,228 900,222 940,200 980,178 1000,172 1015,225 1040,280 1080,335 1120,390 1150,435 1172,471 1200,460 1230,445 1255,439"
        c={SKY}
        w={1}
      />
      <Path pts="40,332 605,228 138,396 40,335" c={RED} w={2} />
      <H y={195} x1={605} x2={730} c={GREEN} w={1} dash="6 3" />
      <H y={234} x1={605} x2={730} c={RED} w={1} dash="6 3" />
      <H y={248} x1={555} x2={690} c={RED} dash="6 3" />
      <H y={262} x1={555} x2={690} c={RED} dash="6 3" />
      <H y={305} x1={605} x2={820} c={RED} dash="6 3" />
      <H y={313} x1={555} x2={820} c={RED} dash="6 3" />
      <H y={353} x1={555} x2={820} c={RED} dash="6 3" />
      <H y={340} x1={80} x2={140} c={RED} dash="6 3" />
      <Note b={[20, 270, 382, 325]} t="HOP: (3966.50)" c="g" />
      <Note b={[145, 318, 455, 368]} t="T1: (3961.25)" c="r" />
      <Note b={[-160, 345, 165, 396]} t="T2: (3959.00)" c="r" />
      <Note b={[684, 218, 1045, 272]} t="HOP: (3974.00)" c="g" />
      <Note b={[732, 220, 1280, 276]} t="1.414 AB=CD (3973.50)" c="r" />
      <Note b={[732, 168, 1095, 225]} t="HOP: (3980.50)" c="g" />
      <Note b={[808, 293, 1115, 342]} t="T1: (3964.75)" c="r" />
      <Note b={[855, 284, 1168, 333]} t="T1: (3965.75)" c="r" />
      <Note b={[805, 330, 1115, 382]} t="T2: (3959.50)" c="r" />
      <Note b={[855, 330, 1168, 382]} t="T2: (3959.25)" c="r" />
      <Txt x={42} y={292} t="2.000" c={YELLOW} s={20} />
      <Txt x={194} y={282} t="1.130" c={YELLOW} s={20} />
      <Txt x={538} y={238} t="D" c={YELLOW} s={20} />
      <Txt x={588} y={217} t="D" c={YELLOW} s={20} />
      <Txt x={120} y={434} t="C" c={YELLOW} s={20} />
      <Burst x={540} y={254} />
      <Burst x={580} y={242} />
      <Arrows down="262,303 702,182 985,142" up="138,402 800,268" />
      <Txt x={56} y={131} t="VMA(ES 12-22 (2100 Tick),14)" />
      <Txt x={1008} y={584} t="hpc patterns found: [13]" c="#5a5a5a" s={10} />
      <Band y70={623} mid={652} y30={683} from={0} to={1270} line={t21Rsi} />
      <Dashes list={[[607, 60, 730], [718, 60, 1010], [905, 60, 730], [1040, 1115, 1275]]} />
      <Hsi
        hi={763}
        red={777}
        mid={822}
        green={869}
        lo={880}
        line="56,870 90,872 103,877 127,874 150,838 178,812 200,783 215,770 238,755 250,770 265,783 285,787 300,795 323,790 337,802 350,808 362,802 373,814 400,814 425,822 448,798 470,822 483,827 510,853 525,840 545,803 560,792 580,787 597,780 630,785 645,780 655,785 668,778 692,771 707,810 728,855 742,880 755,886 780,877 792,880 825,840 840,810 862,800 875,810 900,812 920,785 945,758 962,753 975,775 1000,805 1012,845 1025,856 1045,855 1065,850 1097,828 1120,797 1132,800 1145,810 1160,815 1192,834 1218,812 1232,820 1258,839 1270,842"
      />
      <Band y70={916} mid={964} y30={1014} from={0} to={1270} red={[[0, 945]]} line={t21Rsi} shift={(y) => 964 + (y - 652) * 0.95} />
      {sample(parse(t21Volume), 12.04, 2).map(([x, y]) => (
        <V key={x} x={x} y1={y} y2={1172} c={SKY} w={2} />
      ))}
      <H y={1173} c={LIGHT} w={1} />
      <Axis
        marks="124:3990.00 200:3980.00 274:3970.00 349:3960.00 421:3950.00 497:3940.00 573:3930.00 764:100 822:50 942:60 1115:5000 1174:0"
        top={97}
        bottom={1188}
        seps={[598, 744, 896, 1051]}
      />
      <Tag y={438} t="3947.70" c={SKY} />
      <Tag y={466} t="3944.25" c="#000000" />
      <Tag y={622} t="70" c={BLUE} />
      <Tag y={664} t="41.92" c={YELLOW} />
      <Tag y={684} t="30" c={BLUE} />
      <Tag y={843} t="33.05" c={TEAL} />
      <Tag y={916} t="70" c={BLUE} />
      <Tag y={988} t="40.11" c={YELLOW} />
      <Tag y={1014} t="30" c={BLUE} />
      <Tag y={1039} t="18.93" c={GRAY} />
      <Tag y={1156} t="1482" c={SKY} />
      <Times
        y={1188}
        ly={1226}
        marks={[[150, "13:52"], [297, "13:59"], [593, ""], [655, "Dec 9"], [813, "03:35"], [960, "06:06"], [1106, "06:34"], [1255, "06:44"]]}
      />
    </>
  );
}

/* ---------- ES 500 tick ---------- */

const t5Rsi =
  "22,824 38,790 45,795 55,785 70,782 75,795 95,783 110,788 130,785 140,820 150,830 165,810 178,790 190,810 202,838 212,785 222,800 232,828 242,822 255,785 268,790 280,822 290,790 300,768 310,790 320,822 330,825 348,795 362,825 370,822 382,848 398,830 410,768 417,780 427,775 437,768 447,780 455,770 465,808 475,780 488,775 500,780 512,775 530,810 545,785 560,790 580,772 592,806 600,790 612,757 625,765 635,780 648,790 662,812 680,835 690,838 700,860 712,832 722,848 740,812 748,828 765,798 778,828 790,825 800,805 812,808 830,785 840,765 850,785 860,765 870,795 882,815 895,790 905,815 920,800 930,822 945,785 957,765 970,765 982,780 995,768 1008,770 1022,762 1035,800 1050,848 1062,815 1075,795 1087,815 1092,912 1096,912 1100,855 1108,872 1118,855 1130,830 1145,828 1160,812 1175,828 1190,812 1205,805 1225,790 1250,765 1262,795 1275,812 1285,835 1300,812 1310,797 1325,832 1345,820 1365,825 1375,785 1390,778 1400,810 1412,815 1425,835 1435,825 1445,830 1455,820";
const t5Jitter = sample(parse(t5Rsi), 4, 10)
  .map(([x, y]) => `${x},${y.toFixed(1)}`)
  .join(" ");

function Tick500Chart() {
  return (
    <>
      <Grid
        xs={[48, 126, 205, 283, 361, 439, 518, 580, 661, 741, 818, 897, 976, 1054, 1132, 1211, 1289, 1368, 1446]}
        ys={[216, 385, 551, 716, 887, 1265]}
        top={113}
        bottom={1305}
      />
      <Path pts="10,213 439,205 10,282" fill="#ff000024" />
      <Path pts="465,226 622,149 968,127 785,215" fill="#ff000024" />
      <Path pts="10,213 439,205" c={GRAY} w={1} dash="3 2" />
      <Path pts="622,149 968,127" c={GRAY} w={1} dash="3 2" />
      <Path pts="465,227 785,215" c={GRAY} w={1} dash="3 2" />
      <Candles
        pts="22,255 40,245 65,243 90,242 110,238 125,240 145,244 180,238 220,240 250,245 280,240 300,228 320,245 345,235 355,250 375,262 390,270 405,248 415,235 440,215 455,212 465,222 480,205 495,200 520,185 545,195 575,178 585,172 595,185 610,162 622,150 640,170 660,172 680,185 700,195 715,205 735,200 745,182 760,185 780,212 795,200 830,175 865,152 880,165 905,172 930,172 945,150 960,138 980,120 1020,110 1040,118 1058,140 1070,122 1088,118"
        step={2.9}
        body={1}
        wick={5}
        noise={9}
        mono
      />
      <V x={1090} y1={113} y2={370} w={2} />
      <V x={1094} y1={300} y2={385} w={2} />
      <V x={1101} y1={305} y2={400} w={3} />
      <Candles
        pts="1104,330 1108,425 1112,405 1120,388 1130,380 1145,360 1157,352 1168,380 1178,405 1190,370 1205,370 1225,345 1240,315 1250,300 1262,310 1275,345 1290,358 1300,335 1310,330 1325,350 1345,358 1365,352 1375,330 1390,320 1400,335 1410,350 1430,355 1445,368 1455,362"
        step={2.9}
        body={1}
        wick={8}
        noise={10}
      />
      <Path pts="10,282 439,207" c={RED} w={2} />
      <Path pts="465,225 622,149 785,215 968,127" c={RED} w={2} />
      <H y={203} x1={439} x2={480} c={GREEN} dash="4 2" />
      <H y={212} x1={439} x2={480} c={RED} dash="4 2" />
      <H y={247} x1={439} x2={524} c={RED} w={2} dash="4 2" />
      <H y={275} x1={439} x2={524} c={RED} w={2} dash="4 2" />
      <H y={127} x1={972} x2={1012} c={GREEN} dash="4 2" />
      <H y={139} x1={972} x2={1012} c={RED} dash="4 2" />
      <H y={165} x1={972} x2={1056} c={RED} dash="4 2" />
      <H y={188} x1={972} x2={1056} c={RED} dash="4 2" />
      <Note b={[482, 182, 600, 220]} t="HOP: (3973.00)" c="g" s={12} />
      <Note b={[524, 230, 630, 265]} t="T1: (3964.75)" c="r" s={12} />
      <Note b={[524, 258, 630, 295]} t="T2: (3959.75)" c="r" s={12} />
      <Note b={[1015, 110, 1135, 145]} t="HOP: (3986.25)" c="g" s={12} />
      <Note b={[1056, 148, 1160, 182]} t="T1: (3979.75)" c="r" s={12} />
      <Note b={[1056, 173, 1160, 207]} t="T2: (3975.50)" c="r" s={12} />
      <Txt x={10} y={221} t=".130" c={YELLOW} s={15} />
      <Txt x={433} y={197} t="D" c={YELLOW} s={13} />
      <Txt x={459} y={249} t="A" c={YELLOW} s={13} />
      <Txt x={616} y={140} t="B" c={YELLOW} s={13} />
      <Txt x={776} y={238} t="C" c={YELLOW} s={13} />
      <Txt x={598} y={231} t="0.886" c={YELLOW} s={15} />
      <Txt x={772} y={146} t="1.130" c={YELLOW} s={15} />
      <Txt x={965} y={120} t="D" c={YELLOW} s={13} />
      <Burst x={434} y={212} />
      <Burst x={957} y={140} />
      <Arrows
        down="24,250 65,236 456,200 497,180 515,180 584,168 832,178 869,152 984,122 1260,303 1392,311"
        up="390,275 602,190 712,197 1062,140 1100,395 1289,365 1339,367"
      />
      <Txt x={16} y={146} t="hpcHSIArrowsIndicator (ES 12-22), hpcPatternsIndicator (ES 12-22)" />
      <Txt x={16} y={720} t="Harmonic Pattern Collection v20.12.16" c="#5a5a5a" s={12} />
      <Txt x={1314} y={724} t="hpc patterns found: [12]" c="#5a5a5a" s={10} />
      <Band y70={778} mid={808} y30={841} from={25} to={1455} red={[[25, 298], [634, 840]]} green={[[398, 690], [1192, 1428]]} line={t5Jitter} />
      <Hsi
        hi={957}
        red={970}
        mid={1015}
        green={1060}
        lo={1070}
        line="25,985 35,980 45,970 55,980 65,970 75,990 95,1030 105,990 115,978 128,975 148,1055 165,1000 180,990 203,1055 215,1010 225,1022 235,1010 245,1025 265,982 285,1035 300,985 320,1045 333,1048 348,990 368,1050 388,1062 400,1010 412,952 427,968 440,952 450,975 470,1035 490,962 500,970 515,965 530,1030 545,1010 560,1005 580,970 598,1068 620,985 640,1025 660,1050 675,1048 690,1088 700,1098 715,1055 740,1010 760,990 780,1055 795,1035 805,965 825,965 840,962 850,970 862,955 885,1025 905,1010 915,1022 935,1015 955,950 972,935 985,980 1000,990 1015,1055 1025,1040 1040,1060 1052,1085 1075,990 1085,1000 1100,1062 1130,1040 1158,1000 1178,1050 1200,990 1225,980 1250,940 1262,980 1275,1040 1287,1060 1310,988 1330,1058 1345,1045 1360,1005 1375,1000 1390,965 1400,1000 1410,1050 1422,1050 1432,960 1442,938 1455,945"
      />
      <Band y70={1146} mid={1192} y30={1241} from={25} to={1455} red={[[143, 610]]} green={[[1220, 1455]]} line={t5Jitter} shift={(y) => 1190 + (y - 808) * 0.96} />
      {[[748, 22, 631], [758, 631, 1250], [862, 22, 397], [849, 397, 697], [912, 1130, 1457], [1121, 22, 635], [1269, 22, 1092], [1288, 1126, 1457]].map(
        ([y, a, b]) => (
          <H key={y} y={y} x1={a} x2={b} c={GRAY} w={2} />
        ),
      )}
      <Txt x={16} y={770} t="hpcAmpRSIIndicator (ES 12-22)" />
      <Txt x={16} y={958} t="hpcHSIIndicator (ES 12-22)" />
      <Txt x={16} y={1143} t="hpcRSIBammIndicator (ES 12-22)" />
      <Txt x={16} y={1285} t="© 2022 NinjaTrader, LLC" />
      <Axis
        marks="219:3970.00 273:3960.00 330:3950.00 385:3940.00 440:3930.00 496:3920.00 551:3910.00 606:3900.00 664:3890.00 719:3880.00 887:0 957:100 1015:50 1072:0 1170:60 1265:20"
        top={113}
        bottom={1305}
        seps={[736, 925, 1108]}
      />
      <Tag y={362} t="3944.25" c="#000000" />
      <Tag y={778} t="70" c={BLUE} />
      <Tag y={817} t="43.79" c={YELLOW} />
      <Tag y={841} t="30" c={BLUE} />
      <Tag y={911} t="-16.26" c={GRAY} />
      <Tag y={945} t="110.52" c={TEAL} />
      <Tag y={1146} t="70" c={BLUE} />
      <Tag y={1208} t="43.95" c={YELLOW} />
      <Tag y={1241} t="30" c={GREEN} />
      <Tag y={1287} t="9.39" c={GRAY} />
      <FixedMark x={2052} y={756} />
      <Times
        y={1305}
        ly={1344}
        marks={[[48, "13:58"], [126, "13:59"], [205, "14:01"], [283, "14:19"], [361, "16:58"], [439, "19:04"], [518, ""], [580, "Dec 9"], [661, "01:07"], [741, "02:06"], [818, "03:38"], [897, "04:36"], [976, "05:39"], [1054, "06:17"], [1132, "06:31"], [1211, "06:33"], [1289, "06:36"], [1368, "06:40"], [1446, "06:45"]]}
      />
    </>
  );
}

/* ---------- GC daily ---------- */

const goldRsi =
  "54,820 70,832 103,798 120,827 137,835 153,862 170,850 205,857 220,836 238,836 253,857 272,876 288,867 305,816 322,816 340,810 370,755 387,767 403,769 420,786 436,823 453,810 487,818 505,842 520,823 540,832 555,846 570,844 587,817 605,816 640,797 655,800 672,826 687,829 705,815 722,814 738,834 755,778 773,774 790,746 807,751 824,727 840,722 860,722 890,728 907,753 925,770 940,791 957,791 975,785 990,772 1008,777 1025,800 1042,788 1058,796 1076,738 1092,748 1108,789 1123,788 1142,773 1174,767";

function GoldChart() {
  const zones: [number, number, string][] = [
    [145, 256, "#2a2a2a"],
    [256, 323, "#222a33"],
    [323, 434, "#232632"],
    [434, 504, "#20282b"],
    [504, 558, "#222b27"],
    [558, 603, "#2a2425"],
    [603, 661, "#252b27"],
    [661, 710, "#2f2526"],
  ];
  const levels: [number, string][] = [
    [145, "#a9a9a9"],
    [256, SKY],
    [282, SKY],
    [323, "#6495ed"],
    [368, "#6495ed"],
    [379, "#4682b4"],
    [434, TEAL],
    [438, "#4682b4"],
    [504, TEAL],
    [511, "#2e8b57"],
    [558, "#dc143c"],
    [603, "#2e8b57"],
    [610, "#a9a9a9"],
    [661, "#dc143c"],
    [672, "#a9a9a9"],
  ];
  return (
    <>
      {zones.map(([a, b, c]) => (
        <Zone key={a} y1={a} y2={b} c={c} />
      ))}
      <Grid xs={[-375, -115, 354, 704, 1073]} ys={[103, 220, 336, 454, 570, 731, 872, 1180]} top={20} bottom={1337} />
      <Candles
        pts="54,465 70,455 85,458 102,450 120,465 135,472 153,498 170,493 187,493 203,498 220,492 238,495 253,515 270,530 288,533 304,508 322,502 338,502 354,475 370,453 387,458 403,462 420,470 436,498 452,493 470,497 487,497 503,520 520,508 537,515 553,530 570,532 587,508 603,510 620,512 638,505 655,507 670,520 687,525 705,518 720,518 738,530 755,497 772,495 789,467 805,470 822,438 839,425 857,422 873,417 890,415 906,430 925,432 940,448 957,448 975,445 990,440 1008,438 1025,445 1040,446 1058,438 1074,400 1090,405 1107,428 1123,428 1140,415 1157,412 1174,408"
        body={4}
        wick={8}
      />
      {levels.map(([y, c]) => (
        <H key={y} y={y} c={c} />
      ))}
      <Arrows down="418,462 906,422" up="990,440" c="#f4f4ff" />
      <Txt x={-722} y={46} t="hpcPatternsIndicator (GC 02-23), hpcHSIArrowsIndicator (GC 02-23)" />
      <Txt x={889} y={698} t="hpc patterns found: [18]" c="#6a5a5a" s={10} />
      <Band y70={754} mid={800} y30={850} from={-700} to={1176} line={goldRsi} />
      <Dashes list={[[892, -700, 243], [862, 245, 280], [1320, -700, 1183], [1135, 930, 1185]]} />
      <Hsi
        hi={951}
        red={970}
        mid={1033}
        green={1095}
        lo={1113}
        line="54,1062 75,1052 103,1023 125,1032 153,1071 180,1035 220,1000 238,992 255,1010 270,1038 288,1055 322,1032 340,1017 370,970 403,963 420,977 438,1017 455,1040 487,1064 505,1083 520,1076 537,1078 555,1088 571,1092 587,1073 603,1062 620,1045 638,1020 655,1011 672,1034 687,1050 705,1054 722,1054 738,1070 755,1040 790,990 824,945 857,930 890,923 907,985 925,1035 940,1072 957,1103 973,1111 990,1095 1008,1083 1025,1084 1042,1074 1058,1072 1076,1033 1092,1010 1108,1011 1125,1018 1160,1013 1176,1003"
      />
      <Band y70={1140} mid={1218} y30={1296} from={-700} to={1176} green={[[-700, 270]]} line={goldRsi} shift={(y) => 1226 + (y - 800) * 1.13} />
      <Axis
        marks="103:2200.0 142:2150.0 181:2100.0 220:2050.0 258:2000.0 297:1950.0 336:1900.0 375:1850.0 454:1750.0 491:1700.0 530:1650.0 570:1600.0 609:1550.0 648:1500.0 687:1450.0 731:80 778:60 825:40 872:20 951:100 1034:50 1180:60 1219:50 1256:40"
        top={20}
        bottom={1337}
        seps={[710, 912, 1122]}
      />
      <Tag y={408} t="1807.0" c="#000000" />
      <Tag y={766} t="64.65" c={YELLOW} />
      <Tag y={754} t="70" c={BLUE} />
      <Tag y={850} t="30" c={BLUE} />
      <Tag y={1004} t="68.05" c={TEAL} />
      <Tag y={1140} t="70" c={BLUE} />
      <Tag y={1136} t="71.59" c={GRAY} />
      <Tag y={1166} t="63.39" c={YELLOW} />
      <Tag y={1295} t="30" c={BLUE} />
      <Tag y={1319} t="23.8" c={GRAY} />
      <FixedMark x={2521} y={612} />
      <Times y={1337} ly={1370} marks={[[354, "Oct"], [704, "Nov"], [1073, "Dec"]]} />
    </>
  );
}

/* ---------- NQ 5 minute ---------- */

const nqPriceA =
  "26,1280 34,1235 43,1183 51,1178 60,1190 68,1190 77,1208 85,1230 94,1285 102,1272 110,1250 119,1277 127,1205 136,1215 144,1190 153,1226 161,1243 169,1203 178,1175 187,1207 195,1187 203,1137 212,1192 220,1195 229,1205 237,1190 246,1175 254,1181 263,1225 271,1234 279,1203 288,1157 297,1185 305,1197 313,1212 322,1214 330,1172 338,1147 347,1175 355,1218 364,1233 372,1183 381,1187 389,1169 398,1208 406,1230 415,1226 423,1212 432,1190 440,1170 449,1170 457,1178 466,1140 474,1158 483,1160 491,1170 500,1190 508,1222 517,1172 525,1180 534,1187 542,1173 551,1120 559,1132 567,1140 576,1108 584,1080 593,1068 601,1088 610,1102 618,1075 627,1040 635,1043 643,1017 652,920 660,972 669,990 677,1022 686,983 694,977 703,1018 711,1057 720,1048 728,1040 737,1033 746,1268 754,1297 763,1408 771,1250 780,1103 788,858 797,810 805,714 813,687 822,817 830,740 839,622 847,553 856,620 864,665 873,655 881,632 890,646 898,725 906,844 915,742 923,896 932,903 940,742 949,742 957,670 966,692 974,637 983,643 991,693 1000,777 1008,705 1016,727 1025,748 1033,750 1041,833 1050,810 1058,842 1067,825 1076,780 1085,713 1093,720 1101,726 1110,691 1119,733 1127,711 1135,697 1144,607 1152,567 1161,510 1169,472 1178,487 1187,605 1195,623 1203,815 1212,850 1220,842 1229,822 1237,780 1245,830 1254,852 1262,787 1271,775 1279,742 1287,652 1296,735 1304,763 1313,707 1321,730 1330,665 1338,587 1347,585 1355,613 1364,662 1372,660 1381,765 1389,682 1397,643 1406,637 1414,636 1423,660 1432,628 1440,625 1449,588 1457,606 1466,612 1474,640 1483,670 1491,660 1500,683 1508,615 1517,630 1525,587 1533,607 1542,628 1550,640 1559,648 1567,670";
const nqPriceB =
  "0,670 8,653 17,660 25,652 34,682 43,685 51,702 60,682 68,693 77,697 85,738 94,743 103,724 112,730 120,732 129,730 137,715 146,708 155,700 163,695 172,695 181,660 190,608 199,602 208,583 216,582 225,577 234,580 242,570 251,550 260,556 268,558 277,502 286,540 295,540 303,543 312,550 320,550 329,543 338,538 346,531 355,497 363,483 372,497 381,478 390,470 398,472 407,485 416,502 424,472 433,478 442,476 450,475 459,480 467,465 476,455 485,458 493,458 502,447 511,463 519,470 528,475 537,482 545,485 554,480 563,487 571,472 580,475 589,472 597,472 606,485 615,455 623,470 632,452 641,443 650,464 658,465 667,458 676,452 684,449 693,443 702,448 710,450 719,452 728,445 736,441 745,440 753,440 762,384 771,392 780,404 788,450 797,455 806,422 814,335 823,303 831,322 840,327 849,357 858,380 866,365 875,408 883,395 892,422 900,442 910,450 918,463 926,465 936,430 945,463 953,457 962,450 971,422 980,400 988,400 997,388 1005,403 1014,430 1023,433 1031,493 1040,511 1049,533 1057,507 1066,503 1075,512 1083,478 1092,472 1101,470 1110,447 1118,460 1127,432 1135,442 1144,430 1152,412 1161,442 1170,435 1178,385 1187,338 1196,405 1205,430 1213,410 1222,392 1231,380 1240,378 1248,432 1257,425 1265,395 1274,368 1283,370 1292,378 1300,365 1309,403 1318,398 1327,350 1335,298 1344,262 1353,262 1362,268 1370,270 1378,245 1387,228 1396,215 1404,262 1413,298 1422,285 1430,240 1439,273 1447,803 1456,955 1465,1002 1473,1005";
const nqRsiA =
  "35,124 44,88 52,90 60,128 69,133 77,180 86,225 95,305 103,287 111,255 119,287 127,206 136,225 144,202 153,245 161,264 170,225 179,199 187,240 195,224 204,182 212,246 220,249 229,260 238,248 246,229 254,238 263,290 271,299 279,258 288,213 297,244 305,263 314,273 322,277 330,233 339,209 347,244 356,294 364,303 373,248 382,253 390,235 399,280 407,298 415,293 424,275 432,252 440,228 449,224 458,241 466,200 475,230 483,235 492,248 500,277 508,316 517,245 526,253 534,265 543,247 551,190 559,212 568,218 576,193 584,167 593,160 601,198 610,220 618,193 627,163 635,173 644,152 652,94 661,178 669,195 677,234 686,205 695,200 703,245 711,286 720,278 729,269 738,260 747,410 755,414 763,442 771,320 780,250 788,163 797,157 805,138 814,138 822,202 830,184 839,160 847,148 856,184 864,206 873,206 881,201 890,210 898,246 907,298 915,255 924,310 932,310 940,245 949,245 957,222 966,233 974,214 983,218 991,245 999,281 1008,250 1017,258 1025,271 1033,271 1042,306 1050,292 1059,303 1067,292 1076,265 1085,231 1093,240 1102,240 1110,222 1119,250 1127,238 1136,230 1145,180 1153,165 1161,145 1170,138 1178,160 1187,247 1195,260 1204,347 1212,357 1220,347 1229,330 1237,299 1245,320 1254,329 1262,283 1271,273 1279,255 1288,207 1296,258 1304,273 1313,240 1321,257 1330,220 1338,188 1347,190 1355,217 1364,250 1372,248 1381,305 1389,255 1398,236 1414,235 1425,250 1433,236 1441,233 1450,212 1458,228 1467,237 1475,256 1484,284 1492,273 1500,290 1508,236 1517,249 1525,217 1533,240 1542,257 1559,275 1568,297";
const nqRsiB =
  "0,297 8,272 17,278 26,268 34,300 43,303 52,316 60,287 69,300 78,303 86,347 95,347 103,309 112,315 120,311 129,305 138,277 147,268 155,250 164,244 173,245 181,190 190,131 199,129 208,121 216,125 235,133 243,133 252,113 260,139 269,142 278,90 286,184 295,184 304,204 321,226 329,213 338,205 347,201 356,148 364,137 373,176 381,160 390,152 398,164 407,200 416,234 424,190 433,220 442,204 450,217 459,216 467,198 476,185 485,195 493,194 502,182 511,233 520,262 528,249 537,284 546,288 554,268 563,297 572,249 581,252 589,262 598,252 606,290 616,208 624,250 633,210 641,198 650,254 659,259 667,230 685,217 693,214 702,216 711,231 719,242 728,220 737,214 746,206 754,217 763,102 771,162 780,188 789,297 797,288 806,230 814,125 823,105 832,143 840,163 850,225 858,256 866,237 875,293 883,278 892,315 901,327 918,342 928,335 937,281 945,318 954,305 962,289 971,246 980,220 988,224 997,208 1005,240 1014,280 1023,296 1031,355 1049,380 1057,335 1066,326 1075,332 1084,270 1101,261 1110,227 1118,246 1127,211 1135,229 1144,212 1153,194 1161,249 1170,240 1187,138 1196,240 1205,267 1213,244 1231,218 1240,217 1248,286 1257,275 1265,238 1275,211 1283,216 1292,233 1301,216 1309,268 1318,258 1327,205 1335,165 1344,142 1353,150 1362,165 1370,169 1380,150 1396,137 1404,215 1413,265 1422,252 1430,206 1439,248 1448,475 1457,487 1465,480 1474,470";
const nqHsiA =
  "36,596 44,586 52,576 60,588 69,595 77,640 86,695 95,770 103,804 111,804 119,812 127,768 144,702 153,712 161,729 170,725 179,703 187,713 195,706 204,678 212,700 229,740 237,750 246,736 254,729 263,762 271,795 280,784 288,744 297,731 305,733 314,747 322,768 330,745 339,710 347,710 356,744 364,776 373,767 382,760 390,734 399,742 407,765 416,788 425,786 433,760 441,720 449,682 458,678 466,653 475,667 483,682 491,758 500,835 508,892 517,892 525,885 534,868 542,845 551,792 559,767 568,753 576,725 593,658 601,665 610,689 618,689 627,670 636,656 644,630 652,598 661,622 669,650 677,694 686,710 695,713 703,735 711,768 720,790 729,796 737,793 746,710 755,676 763,707 772,693 780,668 788,635 806,588 814,600 822,665 830,716 839,739 847,751 864,815 881,880 889,905 907,936 915,883 924,862 932,850 940,798 957,729 966,710 974,685 983,676 991,698 1000,743 1008,750 1025,775 1034,781 1042,808 1050,790 1059,783 1067,766 1076,738 1085,696 1102,660 1110,683 1119,731 1127,750 1136,751 1145,710 1161,620 1170,616 1178,665 1187,745 1195,790 1204,842 1212,874 1220,885 1229,875 1237,850 1246,839 1254,839 1262,806 1279,745 1288,688 1296,693 1304,713 1313,714 1321,724 1330,710 1347,645 1355,650 1364,686 1372,689 1381,728 1389,731 1398,717 1407,700 1416,690 1424,695 1441,685 1450,662 1458,667 1467,680 1475,712 1484,765 1500,817 1508,780 1517,757 1525,715 1534,706 1542,716 1560,765 1568,802";
const nqHsiB =
  "0,801 17,801 26,787 34,802 43,820 52,845 60,830 78,826 86,850 95,805 103,760 112,727 121,703 130,685 147,655 155,635 164,615 173,608 181,585 190,565 199,548 208,536 217,610 226,700 234,770 243,811 251,810 260,800 269,783 278,729 295,727 303,738 321,775 329,768 338,752 347,726 364,630 373,630 382,700 398,773 416,836 424,808 433,797 442,770 450,759 459,747 467,727 476,696 493,667 502,647 511,685 520,738 537,803 546,833 554,822 563,832 572,797 581,766 598,740 607,760 616,729 624,731 641,683 650,700 659,724 667,722 676,715 693,680 702,663 711,745 719,815 728,852 737,869 746,862 754,848 763,824 771,824 780,835 789,864 797,884 806,850 814,767 823,697 832,660 840,646 850,685 858,729 866,752 875,790 883,802 901,845 910,867 920,882 928,890 937,838 945,828 954,812 962,786 971,744 980,700 997,637 1005,655 1014,700 1023,750 1040,860 1049,902 1057,880 1066,861 1075,848 1084,790 1092,745 1101,715 1110,675 1118,667 1127,650 1135,652 1144,646 1153,631 1161,668 1170,690 1178,673 1187,642 1205,708 1213,724 1222,731 1231,722 1240,705 1248,740 1257,763 1265,750 1283,703 1292,695 1301,680 1309,718 1318,738 1327,715 1335,680 1353,605 1362,598 1370,680 1380,745 1388,773 1396,782 1413,820 1422,826 1430,798 1439,794 1448,840 1456,875 1465,910 1473,940";

const nqTopA: Geo = { o: [2550, 0], s: [0.8291, 0.4719], l: 18, r: 1568, a: 1568, e: 1568 };
const nqTopB: Geo = { o: [3850, 0], s: [0.81, 0.4719], l: 0, r: 1487, a: 1490, e: 1562 };
const nqLowA: Geo = { ...nqTopA, o: [2550, 700] };
const nqLowB: Geo = { ...nqTopB, o: [3850, 700] };
const nqXsA = [77, 178, 280, 381, 483, 584, 686, 788, 890, 991, 1093, 1194, 1296, 1398, 1500];
const nqXsB = [34, 137, 242, 346, 450, 553, 658, 762, 866, 971, 1074, 1178, 1283, 1387];
const nqHoursA = ["01", "02", "03", "04", "05", "06", "07", "08", "09", "10", "11", "12", "13", "14", "15"].map((h) => `${h}:00`);
const nqHoursB = ["17:00", "18:00", "19:00", "20:00", "21:00", "22:00", "23:00", "Dec 9", "01:00", "02:00", "03:00", "04:00", "05:00", "06:00"];
const nqBamm = (y: number) => 1174 + (y - 262) * 0.93;

function NqChart() {
  return (
    <>
      <Grid xs={nqXsA} ys={[277, 571, 866, 1158, 1453]} top={60} bottom={1546} />
      <Candles pts={nqPriceA} body={4} wick={30} />
      <V x={771} y1={1400} y2={1466} />
      <V x={1212} y1={850} y2={977} />
      <H y={77} c={LIGHT} w={1} />
      <Arrows down="77,1163 669,954 822,651 1178,455" up="542,1202 932,957 1237,842" />
      <Txt x={24} y={93} t="hpcHSIArrowsIndicator (NQ 12-22), hpcPatternsIndicator (NQ 12-22)" />
      <Txt x={24} y={1530} t="Harmonic Pattern Collection v20.12.16" c="#5a5a5a" s={12} />

      <GeoCtx.Provider value={nqTopB}>
        <Grid xs={nqXsB} ys={[277, 571, 866, 1158, 1453]} top={60} bottom={1546} />
        <V x={1447} y1={142} y2={1273} />
        <V x={1456} y1={745} y2={1017} />
        <V x={1465} y1={850} y2={1025} />
        <Candles pts={nqPriceB} body={4} wick={14} />
        <Path pts="1058,543 1187,330 1387,203 1257,443" fill="#ff000024" />
        <Path pts="1058,543 1257,443" c={GRAY} w={1} dash="3 2" />
        <Path pts="1187,330 1387,203" c={GRAY} w={1} dash="3 2" />
        <Path pts="1058,543 1187,330 1257,443 1387,203" c={RED} w={2} />
        <H y={201} x1={1387} x2={1474} c={GREEN} dash="4 2" />
        <H y={218} x1={1387} x2={1474} c={RED} dash="4 2" />
        <H y={229} x1={1387} x2={1474} c={RED} dash="4 2" />
        <H y={333} x1={1387} c={RED} dash="4 2" />
        <H y={413} x1={1387} c={RED} dash="4 2" />
        <Note b={[1475, 182, 1488, 218]} t="H" c="g" s={11} />
        <Note b={[1475, 210, 1488, 247]} t="A" c="r" s={11} />
        <Txt x={1053} y={568} t="A" c={YELLOW} s={12} />
        <Txt x={1182} y={323} t="B" c={YELLOW} s={12} />
        <Txt x={1251} y={466} t="C" c={YELLOW} s={12} />
        <Txt x={1381} y={193} t="D" c={YELLOW} s={12} />
        <Txt x={1273} y={272} t="2.000" c={YELLOW} s={9} />
        <Txt x={1143} y={499} t="0.500" c={YELLOW} s={9} />
        <Burst x={1387} y={203} />
        <H y={77} x2={1482} c={LIGHT} w={1} />
        <Arrows down="225,567 381,472 1161,410 1370,237" up="754,452 806,450 936,473 1075,520" />
        <Txt x={1355} y={1532} t="hpc patterns found: [1]" c="#5a5a5a" s={10} />
        <Axis
          marks="181:11740.00 277:11720.00 377:11700.00 474:11680.00 572:11660.00 669:11640.00 767:11620.00 866:11600.00 964:11580.00 1061:11560.00 1158:11540.00 1258:11520.00 1356:11500.00 1453:11480.00"
          top={60}
          bottom={1546}
          seps={[]}
        />
        <Tag y={77} t="11760.75" c="#3f3f46" />
        <Tag y={1004} t="11571.75" c="#000000" />
      </GeoCtx.Provider>

      <GeoCtx.Provider value={nqLowA}>
        <Grid xs={nqXsA} ys={[93, 220, 469, 775, 946, 991, 1363]} top={62} bottom={1413} />
        <Band y70={178} mid={262} y30={345} from={36} to={1568} green={[[36, 747]]} line={nqRsiA} />
        <Dashes list={[[458, 31, 1568], [989, 219, 1357], [1360, 31, 1568]]} />
        <Hsi hi={600} red={635} mid={745} green={857} lo={889} line={nqHsiA} />
        <Band y70={1055} mid={1177} y30={1301} from={36} to={1568} red={[[263, 653]]} green={[[36, 755]]} line={nqRsiA} shift={nqBamm} />
        <Txt x={24} y={95} t="hpcAmpRSIIndicator (NQ 12-22)" />
        <Txt x={24} y={545} t="hpcHSIIndicator (NQ 12-22)" />
        <Txt x={24} y={998} t="hpcRSIBammIndicator (NQ 12-22)" />
        <Txt x={24} y={1392} t="© 2022 NinjaTrader, LLC" />
        <H y={62} c={LIGHT} w={1} />
        <H y={512} c={LIGHT} w={1} />
        <H y={965} c={LIGHT} w={1} />
        <Times y={1413} ly={1451} marks={nqXsA.map((x, i) => [x, nqHoursA[i]])} />
      </GeoCtx.Provider>

      <GeoCtx.Provider value={nqLowB}>
        <Grid xs={nqXsB} ys={[93, 220, 469, 775, 946, 991, 1363]} top={62} bottom={1413} />
        <Band y70={178} mid={262} y30={345} from={0} to={1474} red={[[538, 763]]} line={nqRsiB} />
        <Dashes list={[[458, 0, 1450], [138, 421, 766], [1360, 0, 1457]]} />
        <Hsi hi={600} red={635} mid={745} green={857} lo={889} line={nqHsiB} />
        <Band y70={1055} mid={1177} y30={1301} from={0} to={1474} line={nqRsiB} shift={nqBamm} />
        <Axis
          marks="94:90 135:80 220:60 262:50 303:40 387:20 431:10 545:120 601:100 659:80 718:60 775:40 832:20 890:0 991:80 1116:60 1178:50 1239:40 1363:20"
          top={62}
          bottom={1413}
          seps={[62, 512, 965]}
        />
        <Tag y={178} t="70" c={BLUE} />
        <Tag y={345} t="30" c={BLUE} />
        <Tag y={470} t="0.173" c={YELLOW} />
        <Tag y={940} t="-17.25" c={TEAL} />
        <Tag y={1055} t="70" c={BLUE} />
        <Tag y={1301} t="30" c={BLUE} />
        <Tag y={1383} t="16.83" c={YELLOW} />
        <Times y={1413} ly={1451} marks={nqXsB.map((x, i) => [x, nqHoursB[i]])} />
      </GeoCtx.Provider>

      {/* crosshair */}
      <line x1={2997.5} x2={2997.5} y1={28} y2={1365} stroke={LIGHT} />
      <rect x={2980} y={1374} width={35} height={20} fill="#2d3038" stroke={LIGHT} />
      <text x={2997} y={1388} fontSize={11} fill="#ffffff" textAnchor="middle">
        05:35
      </text>
    </>
  );
}

/* ---------- desktop ---------- */

function NinjaMark() {
  return (
    <svg viewBox="0 0 48 40" className="h-full w-full">
      <path d="M14 3C2 8-3 24 5 35l3-2C4 22 7 11 14 3z" fill="#8d7a70" />
      <path d="M18 2l10 36-11-4 4-2L11 24l-3 6C8 18 12 8 18 2z" fill="#a08c80" />
      <path d="M20 3l12 24 3-6 4 4-8 12-5-1z" fill="#c8232b" />
      <path d="M34 3c14 6 18 24-3 34 14-12 12-24 3-34z" fill="#d0262d" />
    </svg>
  );
}

function ChromeMark() {
  return (
    <svg viewBox="0 0 48 48" className="h-full w-full">
      <circle cx="24" cy="24" r="24" fill="#fbc116" />
      <path d="M24 24L3.2 12A24 24 0 0 1 44.8 12H24z" fill="#e33b2e" />
      <path d="M3.2 12A24 24 0 0 0 24 48l10.4-18H13.6z" fill="#2a9d47" />
      <circle cx="24" cy="24" r="12" fill="#fff" />
      <circle cx="24" cy="24" r="9.6" fill="#3b7ded" />
    </svg>
  );
}

const shortcuts: { label: string; link?: boolean; icon: ReactNode }[] = [
  {
    label: "This PC",
    icon: (
      <svg viewBox="0 0 48 48" className="h-full w-full">
        <defs>
          <linearGradient id="screen" x1="0" y1="0" x2="1" y2="1">
            <stop offset="0" stopColor="#3fe0ea" />
            <stop offset="1" stopColor="#0d6fc4" />
          </linearGradient>
        </defs>
        <path d="M3 3h42v31H3z" fill="url(#screen)" />
        <path d="M20 34h8v4h-8zM14 38h20v2H14z" fill="#9aa4ad" />
      </svg>
    ),
  },
  {
    label: "McAfee® Total Pro...",
    link: true,
    icon: (
      <svg viewBox="0 0 48 48" className="h-full w-full">
        <path d="M3 1l21 9 21-9v36l-21 11L3 37zM12 14v18l12 6 12-6V14l-12 6z" fill="#c01818" fillRule="evenodd" />
      </svg>
    ),
  },
  {
    label: "Recycle Bin",
    icon: (
      <svg viewBox="0 0 48 48" className="h-full w-full">
        <path d="M7 6l6-4 5 2 6-3 6 3 5-2 6 4-4 38H11z" fill="#e8eaee" />
        <path d="M7 8h34l-4 36H11z" fill="#d5d9e0" fillOpacity=".8" />
        <path d="M19 22l4-7h5l3 5-4 2-2-3-3 5zM32 23l3 6-3 5h-5v-4h3l-2-4zM24 34h-6l-3-5 3-5 4 2-2 4h4z" fill="#1f78d8" />
      </svg>
    ),
  },
  { label: "NinjaTrader 8 (64-bit)", link: true, icon: <NinjaMark /> },
  { label: "NinjaTrader 8", link: true, icon: <NinjaMark /> },
  {
    label: "StreetSmart Edge",
    link: true,
    icon: (
      <span className="flex h-full w-full items-center justify-center rounded-[3px] bg-gradient-to-br from-[#555] via-black to-black text-[19px] leading-none text-white">
        ss<b>e</b>
      </span>
    ),
  },
  {
    label: "At Home Support",
    link: true,
    icon: (
      <svg viewBox="0 0 48 48" className="h-full w-full">
        <path d="M24 1c5 3 11 5 18 5 1 20-3 33-18 41C9 39 5 26 6 6c7 0 13-2 18-5z" fill="#b9bcc2" stroke="#8a8d93" />
        <path d="M15 15h13q5 1 5 6-1 5-7 5h-6v-4h8v-3H15zM17 22h3v6l-3 2z" fill="#24407c" />
      </svg>
    ),
  },
  { label: "Google Chrome", link: true, icon: <ChromeMark /> },
  {
    label: "Trader Workstation",
    link: true,
    icon: (
      <svg viewBox="0 0 48 48" className="h-full w-full">
        <rect x="3" y="3" width="42" height="42" rx="3" fill="#fff" />
        <path d="M29 7L14 25v15z" fill="#d81222" />
        <path d="M14 40l5-9 10 9z" fill="#a00c18" />
        <circle cx="27" cy="28" r="5" fill="#d81222" />
      </svg>
    ),
  },
];

function Desktop() {
  return (
    <nav className="absolute top-[9px] left-0 flex h-[706px] w-[60px] flex-col">
      {shortcuts.map((s) => (
        <a key={s.label} href="#" className="flex min-h-0 flex-1 flex-col items-center text-center font-['Open_Sans','Noto_Sans',sans-serif] text-[9px] leading-3 text-white">
          <span className="relative size-[38px] shrink-0">
            {s.icon}
            {s.link && (
              <svg viewBox="0 0 12 12" className="absolute bottom-0 left-0 size-[10px]">
                <path d="M0 0h12v12H0z" fill="#f4f7fb" />
                <path d="M3 9l5-5M4 3h5v5" stroke="#1a84d8" strokeWidth="1.8" fill="none" />
              </svg>
            )}
          </span>
          <span className="w-[58px]">{s.label}</span>
        </a>
      ))}
    </nav>
  );
}

const menus = [
  { label: "New", d: "M4 2h11v10H4zM4 4h11M1 5v10h11M7 10l4-4M8 6h3v3" },
  { label: "Tools", d: "M2 14l9-9M11 5a3 3 0 0 1 4-4M14 6a3 3 0 0 1-3-1M2 2l4 4M9 10l5 5M10 9l4 4M1 1l3 1" },
  { label: "Workspaces", d: "M4 2h11v8H4zM4 4h11M1 5h3M1 5v8h11v-3" },
  { label: "Connections", d: "M6 1v4M10 1v4M4 5h8v3q-1 3-4 3t-4-3zM5 6h6v2H5zM8 11v5" },
  { label: "Help", d: "M8 2a6 6 0 0 1 4 2M13 5a6 6 0 0 1 1 4M13 11a6 6 0 0 1-4 3M7 14a6 6 0 0 1-4-3M2 9a6 6 0 0 1 1-4M4 4a6 6 0 0 1 3-2" },
];

function ControlCenter() {
  return (
    <section className="absolute top-[10px] left-24 flex h-[490px] w-[709px] flex-col border border-[#3f3f46] bg-[#2d2d30]">
      <header className="flex h-[19px] items-center border-b border-[#3f3f46] bg-[#1e1e1e] pr-1">
        <h1 className="flex h-full w-[154px] items-center justify-center bg-gradient-to-b from-[#a61f23] to-[#6d1519] text-[18px] leading-none text-white">
          <span>NINJA</span>
          <b>TRADER</b>
        </h1>
        <nav className="ml-[14px] flex gap-[18px]">
          {menus.map((m) => (
            <button key={m.label} className="flex items-center gap-[7px] text-xs leading-none font-bold text-[#d4d4d4]">
              <svg viewBox="0 0 16 16" className="size-[14px]" fill="none" stroke="#d4d4d4" strokeWidth={m.label === "Help" ? 2.6 : 1.4}>
                <path d={m.d} />
              </svg>
              {m.label}
            </button>
          ))}
        </nav>
        <div className="ml-auto">
          <WindowButtons active links={false} />
        </div>
      </header>
      <div className="mx-1 mt-[6px] grid flex-1 grid-cols-12 border border-[#3f3f46] bg-[#252526]" />
    </section>
  );
}

function Taskbar() {
  return (
    <footer className="absolute bottom-0 left-0 flex h-[38px] w-1/2 items-center bg-gradient-to-r from-[#1f171c] via-[#322712] to-[#3a1812] pr-[15px] pl-[17px] font-['Open_Sans','Noto_Sans',sans-serif] text-white">
      <button aria-label="Start" className="grid size-[17px] grid-cols-2 gap-px">
        <span className="bg-[#5cc8f5]" />
        <span className="bg-[#4ab8f0]" />
        <span className="bg-[#3aa8ea]" />
        <span className="bg-[#2a98e4]" />
      </button>
      <button className="ml-[14px] flex h-[26px] w-[78px] items-center gap-2 rounded-full bg-[#ffffff14] pl-[14px] text-[9px]">
        <svg viewBox="0 0 12 12" className="size-[10px]" fill="none" stroke="#fff" strokeWidth="1.4">
          <path d="M8.500 5a3.500 3.500 0 1 1-7 0 3.500 3.500 0 0 1 7 0zM7.500 7.500L11 11" />
        </svg>
        Search
      </button>
      <div className="ml-[3px] flex">
        <button aria-label="Task view" className="flex w-[35px] justify-center">
          <svg viewBox="0 0 24 24" className="size-5">
            <path d="M1 7h15v16H1z" fill="#6d6d6d" />
            <path d="M8 1h15v16H8z" fill="#f2f2f2" />
            <path d="M8 7h8v10H8z" fill="#b0b0b0" />
          </svg>
        </button>
        <button aria-label="Weather" className="relative flex w-[35px] justify-center">
          <svg viewBox="0 0 24 20" className="size-5">
            <path d="M6 19a5 5 0 0 1 0-10 7 7 0 0 1 13 1 4.500 4.500 0 0 1 0 9z" fill="#a9cdf7" />
          </svg>
          <span className="absolute -top-[6px] right-0 rounded-full bg-[#2b2b2b] px-[2px] text-[8px]">30°</span>
        </button>
        <button aria-label="Chat" className="flex w-[35px] justify-center">
          <svg viewBox="0 0 24 24" className="size-5">
            <path d="M12 1a11 11 0 1 1-5 21l-6 1 2-5A11 11 0 0 1 12 1z" fill="#5b5fc7" />
            <path d="M6 8h8v8H6zM15 11l4-3v8l-4-3z" fill="#fff" />
          </svg>
        </button>
        <button aria-label="File Explorer" className="flex w-[35px] justify-center">
          <svg viewBox="0 0 24 24" className="size-5">
            <path d="M0 2h9l3 3h12v17H0z" fill="#f3b72b" />
            <path d="M0 8h24v14H0z" fill="#ffd667" />
            <path d="M5 15h14v7H5z" fill="#1b7fd0" />
          </svg>
        </button>
        <button aria-label="Chrome" className="flex w-[35px] items-center justify-center">
          <span className="size-[19px]">
            <ChromeMark />
          </span>
        </button>
        <button aria-label="NinjaTrader" className="relative flex size-[34px] items-center justify-center rounded-[3px] border border-[#ffffff14] bg-[#ffffff14]">
          <span className="h-5 w-[20px]">
            <NinjaMark />
          </span>
          <span className="absolute bottom-0 h-[2px] w-3 rounded-full bg-[#e0a0e8]" />
        </button>
      </div>
      <div className="ml-auto flex items-center gap-[9px]">
        <svg viewBox="0 0 16 8" className="h-[6px] w-3" fill="none" stroke="#fff" strokeWidth="1.5">
          <path d="M1 7l7-6 7 6" />
        </svg>
        <svg viewBox="0 0 18 16" className="h-3 w-[14px]" fill="none" stroke="#fff" strokeWidth="1.3">
          <path d="M10 3H1v9h13V9M4 15h8M7 12v3M12 1h4v4h-4zM14 5v4" />
        </svg>
        <svg viewBox="0 0 18 16" className="h-3 w-[14px]" fill="none" stroke="#fff" strokeWidth="1.3">
          <path d="M1 6h3l4-4v12l-4-4H1zM10 6q1 2 0 4M12 4q3 4 0 8M14 2q4 6 0 12" />
        </svg>
        <time className="ml-1 text-right text-[9px] leading-[13px]">
          6:45 AM
          <br />
          12/9/2022
        </time>
      </div>
    </footer>
  );
}

export default function App() {
  return (
    <main className="relative h-screen w-full overflow-hidden bg-[#18000f] font-['Liberation_Sans',Arial,sans-serif]">
      {/* wallpaper */}
      <div className="absolute inset-y-0 left-0 flex w-1/2">
        <div className="w-[480px] bg-gradient-to-r from-[#13000c] to-[#2b0020]" />
        <div className="w-[340px] bg-gradient-to-r from-[#40002c] to-[#7a0058]" />
        <div className="flex-1 bg-gradient-to-b from-[#0d0008] via-[#1c0004] to-[#400a00]" />
      </div>
      <div className="absolute inset-x-0 top-0 h-[14px] bg-gradient-to-r from-[#160010] to-[#0c0007]" />

      <Desktop />
      <ControlCenter />

      <ChartWindow
        place="left-[80px] top-[564px] h-[557px] w-[672px]"
        symbol="NQ 12-22"
        interval="Daily"
        view="106.25 737.5 827 618"
        thumb="w-[59px]"
        geo={{ o: [100, 660], s: [0.5485, 0.4974], l: 13, r: 1400, a: 1408, e: 1516 }}
      >
        <NqDailyChart />
      </ChartWindow>

      <ChartWindow
        place="left-[1430px] top-[463px] h-[651px] w-[608px]"
        symbol="GC 02-23"
        interval="Daily"
        view="1793.75 611.25 747 736"
        thumb="w-[30px]"
        geo={{ o: [2060, 600], s: [0.3571, 0.5357], l: -740, r: 1204, a: 1211, e: 1342 }}
      >
        <GoldChart />
      </ChartWindow>

      <ChartWindow
        place="left-[1306px] top-[10px] h-[486px] w-[727px]"
        symbol="ES 12-22"
        interval="2100 Tick"
        view="1638.75 45 896 530"
        thumb="w-[71px]"
        geo={{ o: [1960, 0], s: [0.3954, 0.4592], l: -800, r: 1292, a: 1298, e: 1447 }}
      >
        <Tick2100Chart />
      </ChartWindow>

      <ChartWindow
        place="left-[800px] top-[9px] h-[576px] w-[785px]"
        symbol="ES 12-22"
        interval="1000 Tick"
        view="1006.25 43.75 968 642"
        thumb="w-[8px]"
        geo={{ o: [1000, 0], s: [0.6378, 0.4464], l: 13, r: 1440, a: 1443, e: 1525 }}
      >
        <Tick1000Chart />
      </ChartWindow>

      <ChartWindow
        active
        place="left-[91px] top-[36px] h-[486px] w-[703px]"
        symbol="ES 12-22"
        interval="Daily"
        view="120 77.5 866 530"
        thumb="w-[55px]"
        geo={{ o: [0, 0], s: [1 / 3, 1 / 3], l: 363, r: 2787, a: 2795, e: 2952 }}
      >
        <DailyChart />
      </ChartWindow>

      <ChartWindow
        place="left-[87px] top-[533px] h-[483px] w-[662px]"
        symbol="RTY 12-22"
        interval="480 Minute"
        view="115 698.75 815 526"
        thumb="w-[55px]"
        geo={{ o: [100, 660], s: [0.5485, 0.4974], l: 31, r: 1418, a: 1423, e: 1508 }}
      >
        <RtyChart />
      </ChartWindow>

      <ChartWindow
        place="left-[752px] top-[578px] h-[536px] w-[911px]"
        symbol="ES 12-22"
        interval="500 Tick"
        view="946.25 755 1126 592"
        thumb="w-[8px]"
        geo={{ o: [940, 700], s: [0.7334, 0.4719], l: 10, r: 1467, a: 1470, e: 1541 }}
      >
        <Tick500Chart />
      </ChartWindow>

      <Taskbar />

      <ChartWindow
        active
        restore
        place="-top-[3px] right-0 -bottom-px left-1/2"
        symbol="NQ 12-22"
        interval="5 Minute"
        view="2566.25 28.75 2547 1367"
        thumb="w-[71px]"
        geo={nqTopA}
      >
        <NqChart />
      </ChartWindow>
    </main>
  );
}
